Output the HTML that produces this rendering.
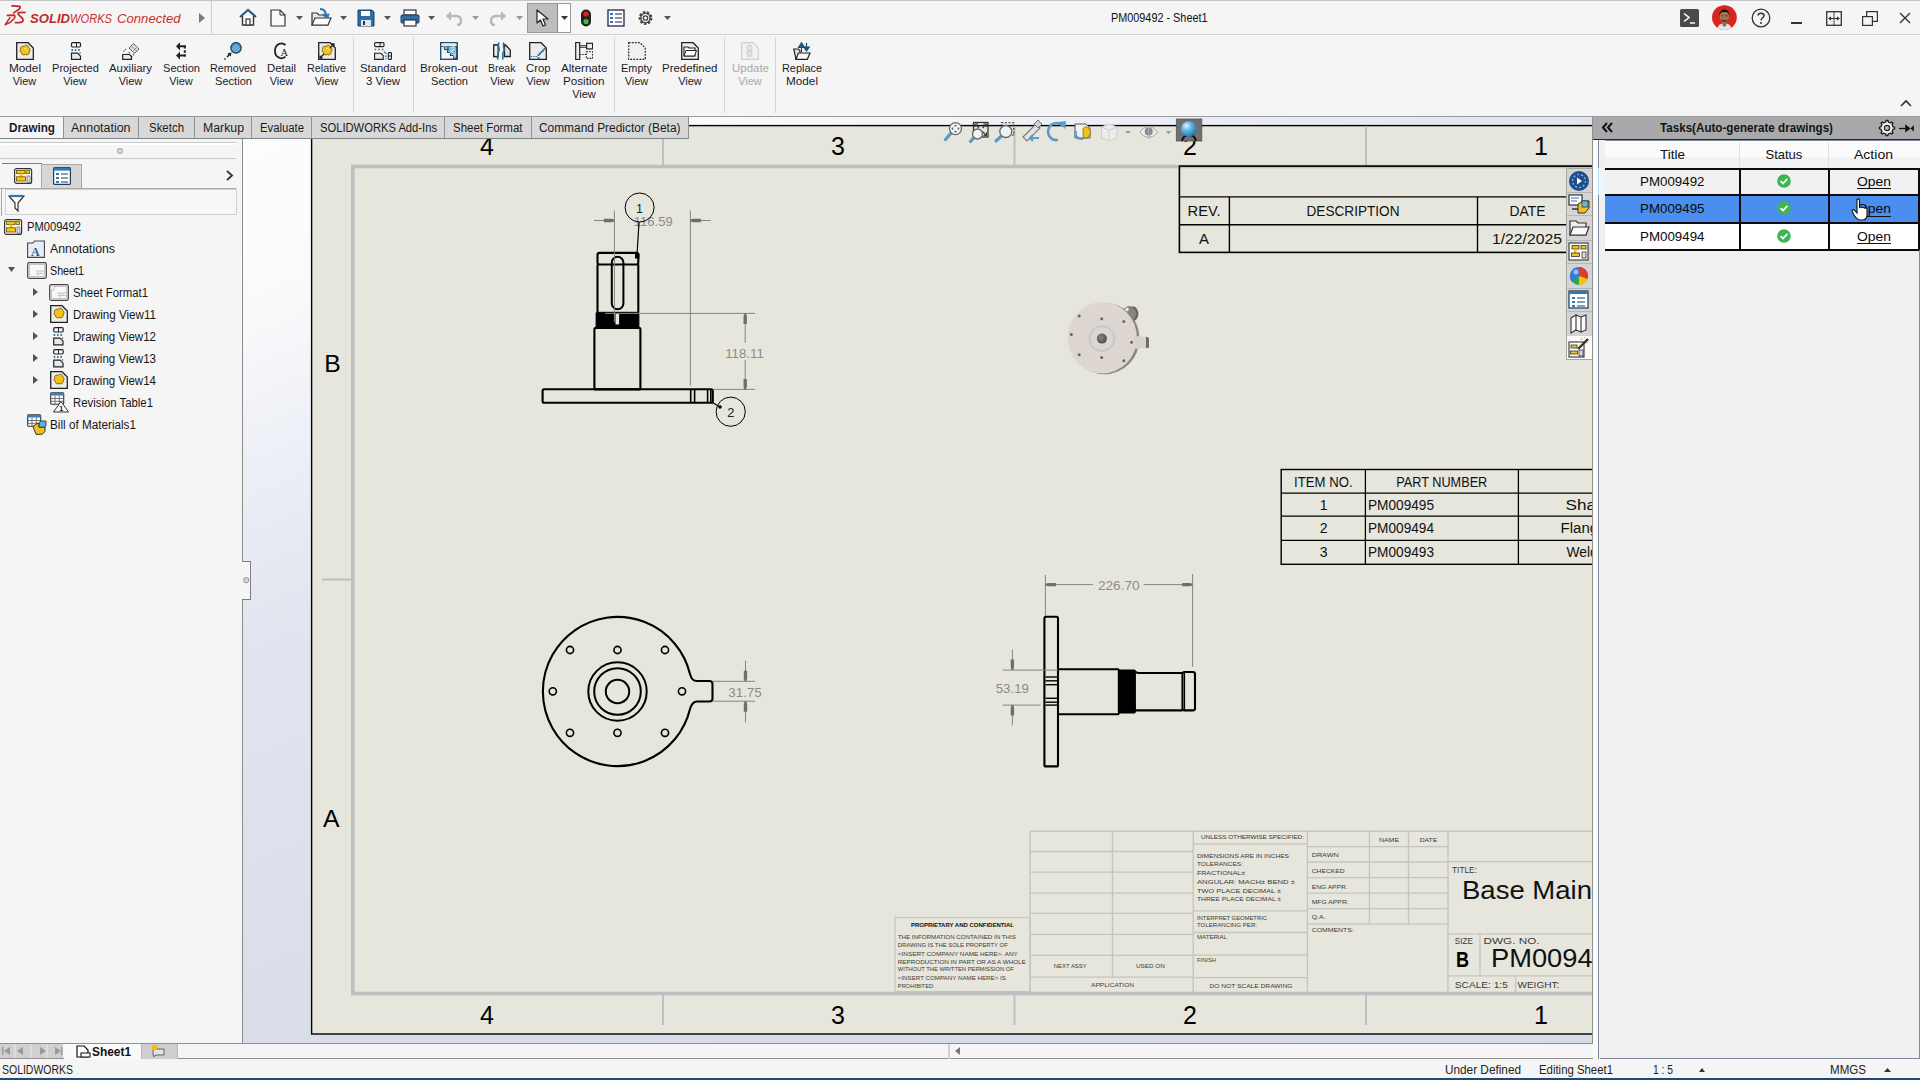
<!DOCTYPE html>
<html><head><meta charset="utf-8">
<style>
*{margin:0;padding:0;box-sizing:border-box}
html,body{width:1920px;height:1080px;overflow:hidden;background:#f5f5f5;font-family:"Liberation Sans",sans-serif;color:#000;position:relative}
.a{position:absolute}
.t{position:absolute;white-space:nowrap}
svg{overflow:hidden}
</style></head><body>
<div class=a style="left:243px;top:117px;width:1349px;height:927px;background:linear-gradient(158deg,#fdfdfd 0%,#fafafb 13%,#eceff6 24%,#e0e5ef 36%,#d9dee9 60%,#d5dbe7 100%)"></div><div class=a style="left:1592px;top:117px;width:1px;height:927px;background:#8f8f8f;"></div><div class=a style="left:243px;top:1043px;width:1350px;height:1px;background:#8f8f8f;"></div><svg class=a style="left:243px;top:117px" width="1349" height="926" viewBox="243 117 1349 926"><rect x="311.6" y="125.6" width="1400" height="908.4" fill="#e6e6dc" stroke="#000" stroke-width="1.4"/><path d="M1700 166.5 H352.8 V993.5 H1700" fill="none" stroke="#c0bfc0" stroke-width="3.6"/><line x1="663" y1="126" x2="663" y2="165" stroke="#c0bfc0" stroke-width="2"/><line x1="663" y1="995" x2="663" y2="1025" stroke="#c0bfc0" stroke-width="2"/><line x1="1014.5" y1="126" x2="1014.5" y2="165" stroke="#c0bfc0" stroke-width="2"/><line x1="1014.5" y1="995" x2="1014.5" y2="1025" stroke="#c0bfc0" stroke-width="2"/><line x1="1366" y1="126" x2="1366" y2="165" stroke="#c0bfc0" stroke-width="2"/><line x1="1366" y1="995" x2="1366" y2="1025" stroke="#c0bfc0" stroke-width="2"/><line x1="322" y1="579.5" x2="351" y2="579.5" stroke="#c0bfc0" stroke-width="2"/><text x="487" y="155.42" font-size="25" fill="#000" text-anchor="middle" font-weight="400" font-family="Liberation Sans">4</text><text x="487" y="1024.22" font-size="25" fill="#000" text-anchor="middle" font-weight="400" font-family="Liberation Sans">4</text><text x="838" y="155.42" font-size="25" fill="#000" text-anchor="middle" font-weight="400" font-family="Liberation Sans">3</text><text x="838" y="1024.22" font-size="25" fill="#000" text-anchor="middle" font-weight="400" font-family="Liberation Sans">3</text><text x="1190" y="155.42" font-size="25" fill="#000" text-anchor="middle" font-weight="400" font-family="Liberation Sans">2</text><text x="1190" y="1024.22" font-size="25" fill="#000" text-anchor="middle" font-weight="400" font-family="Liberation Sans">2</text><text x="1541" y="155.42" font-size="25" fill="#000" text-anchor="middle" font-weight="400" font-family="Liberation Sans">1</text><text x="1541" y="1024.22" font-size="25" fill="#000" text-anchor="middle" font-weight="400" font-family="Liberation Sans">1</text><text x="332.5" y="372.11" font-size="24.7" fill="#000" text-anchor="middle" font-weight="400" font-family="Liberation Sans">B</text><text x="331.3" y="826.81" font-size="24.7" fill="#000" text-anchor="middle" font-weight="400" font-family="Liberation Sans">A</text><rect x="597.5" y="252.9" width="40.8" height="11.6" stroke="#000" stroke-width="2.1" fill="none" rx="2"/><line x1="597.5" y1="264.5" x2="597.5" y2="312.5" stroke="#000" stroke-width="2.1"/><line x1="638.3" y1="264.5" x2="638.3" y2="312.5" stroke="#000" stroke-width="2.1"/><rect x="611.8" y="256.8" width="11.6" height="52.5" stroke="#000" stroke-width="2" fill="none" rx="5.8"/><rect x="596.1" y="312.3" width="42.8" height="15.6" stroke="#000" stroke-width="1" fill="#000" rx="1"/><rect x="594.4" y="327.9" width="46" height="61.5" stroke="#000" stroke-width="2.1" fill="none" rx="1.5"/><rect x="542.6" y="389.2" width="170.2" height="13.6" stroke="#000" stroke-width="2.1" fill="none" rx="1.5"/><line x1="690.7" y1="390" x2="690.7" y2="402" stroke="#000" stroke-width="1.6"/><line x1="694.6" y1="390" x2="694.6" y2="402" stroke="#000" stroke-width="1.6"/><line x1="707.6" y1="390" x2="707.6" y2="402" stroke="#000" stroke-width="1.6"/><line x1="710.8" y1="390" x2="710.8" y2="402" stroke="#000" stroke-width="1.6"/><rect x="615.5" y="314" width="3.6" height="10.5" stroke="none" stroke-width="0" fill="#e6e6dc" rx="0"/><line x1="614.4" y1="210.7" x2="614.4" y2="322" stroke="#85857f" stroke-width="1"/><line x1="690.4" y1="210.7" x2="690.4" y2="385.6" stroke="#85857f" stroke-width="1"/><line x1="594" y1="220.5" x2="614.4" y2="220.5" stroke="#85857f" stroke-width="1"/><line x1="690.4" y1="220.5" x2="711" y2="220.5" stroke="#85857f" stroke-width="1"/><path d="M614.4 219.6 L611.4 218.8 H603.9 V222.2 H611.4 L614.4 221.4Z" fill="#6f6f6a"/><path d="M690.4 219.6 L693.4 218.8 H700.9 V222.2 H693.4 L690.4 221.4Z" fill="#6f6f6a"/><text x="653.2" y="226.30" font-size="13.3" fill="#8c8c87" text-anchor="middle" font-weight="400" font-family="Liberation Sans" textLength="38.9" lengthAdjust="spacingAndGlyphs">116.59</text><line x1="605" y1="313.4" x2="755" y2="313.4" stroke="#85857f" stroke-width="1"/><line x1="712.8" y1="389.4" x2="755" y2="389.4" stroke="#85857f" stroke-width="1"/><line x1="745.2" y1="313.4" x2="745.2" y2="342.8" stroke="#85857f" stroke-width="1"/><line x1="745.2" y1="360.3" x2="745.2" y2="389.4" stroke="#85857f" stroke-width="1"/><path d="M744.3000000000001 313.4 L743.5 316.4 V323.9 H746.9000000000001 V316.4 L746.1 313.4Z" fill="#6f6f6a"/><path d="M744.3000000000001 389.4 L743.5 386.4 V378.9 H746.9000000000001 V386.4 L746.1 389.4Z" fill="#6f6f6a"/><text x="744.5" y="357.60" font-size="13.3" fill="#8c8c87" text-anchor="middle" font-weight="400" font-family="Liberation Sans" textLength="38.5" lengthAdjust="spacingAndGlyphs">118.11</text><circle cx="639.6" cy="207.5" r="14.5" fill="none" stroke="#000" stroke-width="1"/><text x="639.6" y="213.41" font-size="12.5" fill="#222" text-anchor="middle" font-weight="400" font-family="Liberation Sans">1</text><line x1="639" y1="222" x2="637" y2="255" stroke="#000" stroke-width="1.2"/><rect x="635" y="253.5" width="4.5" height="5" fill="#000"/><circle cx="730.7" cy="411.7" r="14.6" fill="none" stroke="#000" stroke-width="1"/><text x="730.9" y="417.33" font-size="12.8" fill="#222" text-anchor="middle" font-weight="400" font-family="Liberation Sans">2</text><line x1="712.8" y1="402.8" x2="720" y2="407" stroke="#000" stroke-width="1.2"/><circle cx="720" cy="407" r="1.8" fill="#000"/><defs><radialGradient id="hole" cx="0.4" cy="0.4" r="0.7"><stop offset="0" stop-color="#8a8482"/><stop offset="1" stop-color="#4a4644"/></radialGradient></defs><ellipse cx="1104.5" cy="338.5" rx="35" ry="35.8" fill="#8c8580"/><circle cx="1130" cy="313.5" r="7.6" fill="#8a847f"/><path d="M1133 307 A7.6 7.6 0 0 1 1134 320" stroke="#6a6560" stroke-width="2.4" fill="none"/><circle cx="1127" cy="309.5" r="1.7" fill="#f2f2f2"/><ellipse cx="1102.3" cy="337.7" rx="34.6" ry="35.8" fill="#ddd6d1"/><path d="M1134 336 L1146.5 337 L1146.5 348 L1134 349 Z" fill="#d9d2cd"/><path d="M1146 336.6 L1149 338 L1149 347.5 L1146 348.2 Z" fill="#6f6a66"/><circle cx="1101.9" cy="338.6" r="12.3" fill="none" stroke="#c3c9cd" stroke-width="2"/><circle cx="1101.9" cy="338.6" r="5" fill="url(#hole)"/><circle cx="1079.2" cy="315.9" r="1.5" fill="#6a6562"/><circle cx="1101.7" cy="318.7" r="1.5" fill="#6a6562"/><circle cx="1123.8" cy="321.5" r="1.5" fill="#6a6562"/><circle cx="1071.3" cy="334.4" r="1.5" fill="#6a6562"/><circle cx="1131.5" cy="342.3" r="1.5" fill="#6a6562"/><circle cx="1079.2" cy="354.8" r="1.5" fill="#6a6562"/><circle cx="1101.7" cy="357.6" r="1.5" fill="#6a6562"/><circle cx="1123.8" cy="360.8" r="1.5" fill="#6a6562"/><path d="M690 674 C691.5 679 693 681 697 681 H709.5 Q712.5 681 712.5 684 V698.5 Q712.5 701.5 709.5 701.5 H697 C693 701.5 691.5 704 690 709 A74.6 74.6 0 1 1 690 674 Z" fill="none" stroke="#000" stroke-width="2.1"/><circle cx="617.5" cy="691.5" r="29.2" fill="none" stroke="#000" stroke-width="2"/><circle cx="617.5" cy="691.5" r="23.3" fill="none" stroke="#000" stroke-width="2"/><circle cx="617.5" cy="691.5" r="11.7" fill="none" stroke="#000" stroke-width="2"/><circle cx="570" cy="650" r="3.6" fill="none" stroke="#000" stroke-width="1.6"/><circle cx="617.5" cy="650" r="3.6" fill="none" stroke="#000" stroke-width="1.6"/><circle cx="665" cy="650" r="3.6" fill="none" stroke="#000" stroke-width="1.6"/><circle cx="552.8" cy="691.3" r="3.6" fill="none" stroke="#000" stroke-width="1.6"/><circle cx="682" cy="691.3" r="3.6" fill="none" stroke="#000" stroke-width="1.6"/><circle cx="570" cy="732.8" r="3.6" fill="none" stroke="#000" stroke-width="1.6"/><circle cx="617.5" cy="732.8" r="3.6" fill="none" stroke="#000" stroke-width="1.6"/><circle cx="665" cy="732.8" r="3.6" fill="none" stroke="#000" stroke-width="1.6"/><line x1="712.5" y1="681.3" x2="755" y2="681.3" stroke="#85857f" stroke-width="1"/><line x1="712.5" y1="701.2" x2="755" y2="701.2" stroke="#85857f" stroke-width="1"/><line x1="745.5" y1="660.8" x2="745.5" y2="681.3" stroke="#85857f" stroke-width="1"/><line x1="745.5" y1="701.2" x2="745.5" y2="722.5" stroke="#85857f" stroke-width="1"/><path d="M744.6 681.3 L743.8 678.3 V670.8 H747.2 V678.3 L746.4 681.3Z" fill="#6f6f6a"/><path d="M744.6 701.2 L743.8 704.2 V711.7 H747.2 V704.2 L746.4 701.2Z" fill="#6f6f6a"/><text x="745" y="697.20" font-size="13.3" fill="#8c8c87" text-anchor="middle" font-weight="400" font-family="Liberation Sans" textLength="33.4" lengthAdjust="spacingAndGlyphs">31.75</text><rect x="1044.4" y="616.7" width="13.6" height="149.7" stroke="#000" stroke-width="2.1" fill="none" rx="1.5"/><path d="M1058 669.2 H1118 L1119.5 671 V712.5 L1118 714.3 H1058" fill="none" stroke="#000" stroke-width="2.1"/><rect x="1118.3" y="670" width="17.1" height="43" stroke="#000" stroke-width="1" fill="#000" rx="1"/><path d="M1135.4 672 L1138 673 H1182.5 M1135.4 710.4 H1182.5" fill="none" stroke="#000" stroke-width="2.2"/><rect x="1182.5" y="672" width="12.5" height="38.4" stroke="#000" stroke-width="2.1" fill="none" rx="2"/><line x1="1184.5" y1="673" x2="1184.5" y2="710" stroke="#000" stroke-width="1.2"/><line x1="1045.5" y1="677" x2="1057" y2="677" stroke="#000" stroke-width="1.4"/><line x1="1045.5" y1="680.8" x2="1057" y2="680.8" stroke="#000" stroke-width="1.4"/><line x1="1045.5" y1="684.7" x2="1057" y2="684.7" stroke="#000" stroke-width="1.4"/><line x1="1045.5" y1="698.3" x2="1057" y2="698.3" stroke="#000" stroke-width="1.4"/><line x1="1045.5" y1="702.2" x2="1057" y2="702.2" stroke="#000" stroke-width="1.4"/><line x1="1045.5" y1="705.1" x2="1057" y2="705.1" stroke="#000" stroke-width="1.4"/><line x1="1045.4" y1="574.9" x2="1045.4" y2="616" stroke="#85857f" stroke-width="1"/><line x1="1192.6" y1="574" x2="1192.6" y2="667" stroke="#85857f" stroke-width="1"/><line x1="1045.4" y1="584.6" x2="1093" y2="584.6" stroke="#85857f" stroke-width="1"/><line x1="1143.6" y1="584.6" x2="1192.6" y2="584.6" stroke="#85857f" stroke-width="1"/><path d="M1045.4 583.7 L1048.4 582.9 H1055.9 V586.3000000000001 H1048.4 L1045.4 585.5Z" fill="#6f6f6a"/><path d="M1192.6 583.7 L1189.6 582.9 H1182.1 V586.3000000000001 H1189.6 L1192.6 585.5Z" fill="#6f6f6a"/><text x="1118.8" y="590.40" font-size="13.3" fill="#8c8c87" text-anchor="middle" font-weight="400" font-family="Liberation Sans" textLength="41.7" lengthAdjust="spacingAndGlyphs">226.70</text><line x1="1002.6" y1="670.1" x2="1058" y2="670.1" stroke="#85857f" stroke-width="1"/><line x1="1002.6" y1="705.1" x2="1040.5" y2="705.1" stroke="#85857f" stroke-width="1"/><line x1="1012.4" y1="649.7" x2="1012.4" y2="670.1" stroke="#85857f" stroke-width="1"/><line x1="1012.4" y1="705.1" x2="1012.4" y2="725.5" stroke="#85857f" stroke-width="1"/><path d="M1011.5 670.1 L1010.6999999999999 667.1 V659.6 H1014.1 V667.1 L1013.3 670.1Z" fill="#6f6f6a"/><path d="M1011.5 705.1 L1010.6999999999999 708.1 V715.6 H1014.1 V708.1 L1013.3 705.1Z" fill="#6f6f6a"/><text x="1012.3" y="693.40" font-size="13.3" fill="#8c8c87" text-anchor="middle" font-weight="400" font-family="Liberation Sans" textLength="33.1" lengthAdjust="spacingAndGlyphs">53.19</text><rect x="1179.4" y="166.1" width="600" height="86.3" stroke="#000" stroke-width="1.6" fill="none" rx="0"/><line x1="1179.4" y1="196.9" x2="1600" y2="196.9" stroke="#000" stroke-width="1.4"/><line x1="1179.4" y1="224.7" x2="1600" y2="224.7" stroke="#000" stroke-width="1.4"/><line x1="1229.4" y1="196.9" x2="1229.4" y2="252.4" stroke="#000" stroke-width="1.4"/><line x1="1477.5" y1="196.9" x2="1477.5" y2="252.4" stroke="#000" stroke-width="1.4"/><text x="1204" y="216.44" font-size="15" fill="#111" text-anchor="middle" font-weight="400" font-family="Liberation Sans" textLength="33" lengthAdjust="spacingAndGlyphs">REV.</text><text x="1353" y="216.44" font-size="15" fill="#111" text-anchor="middle" font-weight="400" font-family="Liberation Sans" textLength="93" lengthAdjust="spacingAndGlyphs">DESCRIPTION</text><text x="1527.5" y="216.44" font-size="15" fill="#111" text-anchor="middle" font-weight="400" font-family="Liberation Sans" textLength="36" lengthAdjust="spacingAndGlyphs">DATE</text><text x="1204" y="244.44" font-size="15" fill="#111" text-anchor="middle" font-weight="400" font-family="Liberation Sans">A</text><text x="1527" y="244.44" font-size="15" fill="#111" text-anchor="middle" font-weight="400" font-family="Liberation Sans" textLength="70" lengthAdjust="spacingAndGlyphs">1/22/2025</text><rect x="1281.2" y="469.5" width="600" height="94.8" stroke="#000" stroke-width="1.4" fill="none" rx="0"/><line x1="1281.2" y1="493.2" x2="1600" y2="493.2" stroke="#000" stroke-width="1.3"/><line x1="1281.2" y1="516.2" x2="1600" y2="516.2" stroke="#000" stroke-width="1.3"/><line x1="1281.2" y1="540.3" x2="1600" y2="540.3" stroke="#000" stroke-width="1.3"/><line x1="1365.4" y1="469.5" x2="1365.4" y2="564.3" stroke="#000" stroke-width="1.3"/><line x1="1518.4" y1="469.5" x2="1518.4" y2="564.3" stroke="#000" stroke-width="1.3"/><text x="1323.3" y="486.51" font-size="14" fill="#111" text-anchor="middle" font-weight="400" font-family="Liberation Sans" textLength="58.5" lengthAdjust="spacingAndGlyphs">ITEM NO.</text><text x="1441.8" y="486.51" font-size="14" fill="#111" text-anchor="middle" font-weight="400" font-family="Liberation Sans" textLength="91" lengthAdjust="spacingAndGlyphs">PART NUMBER</text><text x="1323.6" y="510.21" font-size="14" fill="#111" text-anchor="middle" font-weight="400" font-family="Liberation Sans">1</text><text x="1368" y="510.21" font-size="14" fill="#111" text-anchor="start" font-weight="400" font-family="Liberation Sans" textLength="66" lengthAdjust="spacingAndGlyphs">PM009495</text><text x="1565.6" y="510.21" font-size="14" fill="#111" text-anchor="start" font-weight="400" font-family="Liberation Sans" textLength="40" lengthAdjust="spacingAndGlyphs">Shaft</text><text x="1323.6" y="532.71" font-size="14" fill="#111" text-anchor="middle" font-weight="400" font-family="Liberation Sans">2</text><text x="1368" y="532.71" font-size="14" fill="#111" text-anchor="start" font-weight="400" font-family="Liberation Sans" textLength="66" lengthAdjust="spacingAndGlyphs">PM009494</text><text x="1560.5" y="532.71" font-size="14" fill="#111" text-anchor="start" font-weight="400" font-family="Liberation Sans" textLength="46" lengthAdjust="spacingAndGlyphs">Flange</text><text x="1323.6" y="556.71" font-size="14" fill="#111" text-anchor="middle" font-weight="400" font-family="Liberation Sans">3</text><text x="1368" y="556.71" font-size="14" fill="#111" text-anchor="start" font-weight="400" font-family="Liberation Sans" textLength="66" lengthAdjust="spacingAndGlyphs">PM009493</text><text x="1566.5" y="556.71" font-size="14" fill="#111" text-anchor="start" font-weight="400" font-family="Liberation Sans" textLength="62" lengthAdjust="spacingAndGlyphs">Weldment</text><rect x="895" y="917.5" width="135" height="74" stroke="#c4c4c0" stroke-width="1.2" fill="none" rx="0"/><line x1="1030" y1="831.3" x2="1600" y2="831.3" stroke="#c4c4c0" stroke-width="1.5"/><line x1="1030" y1="851.5" x2="1193" y2="851.5" stroke="#c4c4c0" stroke-width="1.3"/><line x1="1030" y1="872.1" x2="1193" y2="872.1" stroke="#c4c4c0" stroke-width="1.3"/><line x1="1030" y1="893.1" x2="1193" y2="893.1" stroke="#c4c4c0" stroke-width="1.3"/><line x1="1030" y1="913.4" x2="1193" y2="913.4" stroke="#c4c4c0" stroke-width="1.3"/><line x1="1030" y1="934.4" x2="1193" y2="934.4" stroke="#c4c4c0" stroke-width="1.3"/><line x1="1030" y1="955.4" x2="1193" y2="955.4" stroke="#c4c4c0" stroke-width="1.3"/><line x1="1030" y1="977.1" x2="1193" y2="977.1" stroke="#c4c4c0" stroke-width="1.3"/><line x1="1030" y1="831.3" x2="1030" y2="992" stroke="#c4c4c0" stroke-width="1.3"/><line x1="1193.2" y1="831.3" x2="1193.2" y2="992" stroke="#c4c4c0" stroke-width="1.3"/><line x1="1307.4" y1="831.3" x2="1307.4" y2="992" stroke="#c4c4c0" stroke-width="1.3"/><line x1="1448" y1="831.3" x2="1448" y2="992" stroke="#c4c4c0" stroke-width="1.3"/><line x1="1112.5" y1="831.3" x2="1112.5" y2="977.1" stroke="#c4c4c0" stroke-width="1.3"/><line x1="1193.2" y1="843.9" x2="1307.4" y2="843.9" stroke="#c4c4c0" stroke-width="1.3"/><line x1="1193.2" y1="910.8" x2="1307.4" y2="910.8" stroke="#c4c4c0" stroke-width="1.3"/><line x1="1193.2" y1="932.5" x2="1307.4" y2="932.5" stroke="#c4c4c0" stroke-width="1.3"/><line x1="1193.2" y1="955.2" x2="1307.4" y2="955.2" stroke="#c4c4c0" stroke-width="1.3"/><line x1="1193.2" y1="977.6" x2="1307.4" y2="977.6" stroke="#c4c4c0" stroke-width="1.3"/><line x1="1307.4" y1="846.7" x2="1448" y2="846.7" stroke="#c4c4c0" stroke-width="1.3"/><line x1="1307.4" y1="862" x2="1448" y2="862" stroke="#c4c4c0" stroke-width="1.3"/><line x1="1307.4" y1="877.7" x2="1448" y2="877.7" stroke="#c4c4c0" stroke-width="1.3"/><line x1="1307.4" y1="893.2" x2="1448" y2="893.2" stroke="#c4c4c0" stroke-width="1.3"/><line x1="1307.4" y1="908.6" x2="1448" y2="908.6" stroke="#c4c4c0" stroke-width="1.3"/><line x1="1307.4" y1="924.2" x2="1448" y2="924.2" stroke="#c4c4c0" stroke-width="1.3"/><line x1="1369.4" y1="831.3" x2="1369.4" y2="924.2" stroke="#c4c4c0" stroke-width="1.3"/><line x1="1408.5" y1="831.3" x2="1408.5" y2="924.2" stroke="#c4c4c0" stroke-width="1.3"/><line x1="1448" y1="861.6" x2="1600" y2="861.6" stroke="#c4c4c0" stroke-width="1.3"/><line x1="1448" y1="933.8" x2="1600" y2="933.8" stroke="#c4c4c0" stroke-width="1.3"/><line x1="1448" y1="975.9" x2="1600" y2="975.9" stroke="#c4c4c0" stroke-width="1.3"/><line x1="1480" y1="933.8" x2="1480" y2="975.9" stroke="#c4c4c0" stroke-width="1.3"/><line x1="1515.6" y1="975.9" x2="1515.6" y2="992" stroke="#c4c4c0" stroke-width="1.3"/><text x="962.5" y="927.02" font-size="6.2" fill="#111" text-anchor="middle" font-weight="700" font-family="Liberation Sans" textLength="103" lengthAdjust="spacingAndGlyphs">PROPRIETARY AND CONFIDENTIAL</text><text x="897.8" y="938.67" font-size="6" fill="#3a3a3a" text-anchor="start" font-weight="400" font-family="Liberation Sans" textLength="118" lengthAdjust="spacingAndGlyphs">THE INFORMATION CONTAINED IN THIS</text><text x="897.8" y="946.77" font-size="6" fill="#3a3a3a" text-anchor="start" font-weight="400" font-family="Liberation Sans" textLength="110" lengthAdjust="spacingAndGlyphs">DRAWING IS THE SOLE PROPERTY OF</text><text x="897.8" y="955.57" font-size="6" fill="#3a3a3a" text-anchor="start" font-weight="400" font-family="Liberation Sans" textLength="120" lengthAdjust="spacingAndGlyphs">&lt;INSERT COMPANY NAME HERE&gt;.  ANY</text><text x="897.8" y="963.67" font-size="6" fill="#3a3a3a" text-anchor="start" font-weight="400" font-family="Liberation Sans" textLength="128" lengthAdjust="spacingAndGlyphs">REPRODUCTION IN PART OR AS A WHOLE</text><text x="897.8" y="971.47" font-size="6" fill="#3a3a3a" text-anchor="start" font-weight="400" font-family="Liberation Sans" textLength="116" lengthAdjust="spacingAndGlyphs">WITHOUT THE WRITTEN PERMISSION OF</text><text x="897.8" y="979.57" font-size="6" fill="#3a3a3a" text-anchor="start" font-weight="400" font-family="Liberation Sans" textLength="108" lengthAdjust="spacingAndGlyphs">&lt;INSERT COMPANY NAME HERE&gt; IS</text><text x="897.8" y="988.37" font-size="6" fill="#3a3a3a" text-anchor="start" font-weight="400" font-family="Liberation Sans" textLength="37" lengthAdjust="spacingAndGlyphs">PROHIBITED.</text><text x="1070.3" y="968.37" font-size="6" fill="#3a3a3a" text-anchor="middle" font-weight="400" font-family="Liberation Sans" textLength="33" lengthAdjust="spacingAndGlyphs">NEXT ASSY</text><text x="1150.4" y="968.37" font-size="6" fill="#3a3a3a" text-anchor="middle" font-weight="400" font-family="Liberation Sans" textLength="29" lengthAdjust="spacingAndGlyphs">USED ON</text><text x="1112.5" y="987.47" font-size="6" fill="#3a3a3a" text-anchor="middle" font-weight="400" font-family="Liberation Sans" textLength="43" lengthAdjust="spacingAndGlyphs">APPLICATION</text><text x="1201" y="839.22" font-size="6.2" fill="#3a3a3a" text-anchor="start" font-weight="400" font-family="Liberation Sans" textLength="103" lengthAdjust="spacingAndGlyphs">UNLESS OTHERWISE SPECIFIED:</text><text x="1197" y="858.37" font-size="6" fill="#3a3a3a" text-anchor="start" font-weight="400" font-family="Liberation Sans" textLength="92" lengthAdjust="spacingAndGlyphs">DIMENSIONS ARE IN INCHES</text><text x="1197" y="866.47" font-size="6" fill="#3a3a3a" text-anchor="start" font-weight="400" font-family="Liberation Sans" textLength="46" lengthAdjust="spacingAndGlyphs">TOLERANCES:</text><text x="1197" y="875.47" font-size="6" fill="#3a3a3a" text-anchor="start" font-weight="400" font-family="Liberation Sans" textLength="48" lengthAdjust="spacingAndGlyphs">FRACTIONAL±</text><text x="1197" y="883.57" font-size="6" fill="#3a3a3a" text-anchor="start" font-weight="400" font-family="Liberation Sans" textLength="98" lengthAdjust="spacingAndGlyphs">ANGULAR: MACH±    BEND ±</text><text x="1197" y="892.57" font-size="6" fill="#3a3a3a" text-anchor="start" font-weight="400" font-family="Liberation Sans" textLength="84" lengthAdjust="spacingAndGlyphs">TWO PLACE DECIMAL    ±</text><text x="1197" y="901.47" font-size="6" fill="#3a3a3a" text-anchor="start" font-weight="400" font-family="Liberation Sans" textLength="84" lengthAdjust="spacingAndGlyphs">THREE PLACE DECIMAL  ±</text><text x="1197" y="919.67" font-size="6" fill="#3a3a3a" text-anchor="start" font-weight="400" font-family="Liberation Sans" textLength="70" lengthAdjust="spacingAndGlyphs">INTERPRET GEOMETRIC</text><text x="1197" y="927.37" font-size="6" fill="#3a3a3a" text-anchor="start" font-weight="400" font-family="Liberation Sans" textLength="60" lengthAdjust="spacingAndGlyphs">TOLERANCING PER:</text><text x="1197" y="939.47" font-size="6" fill="#3a3a3a" text-anchor="start" font-weight="400" font-family="Liberation Sans" textLength="30" lengthAdjust="spacingAndGlyphs">MATERIAL</text><text x="1197" y="961.97" font-size="6" fill="#3a3a3a" text-anchor="start" font-weight="400" font-family="Liberation Sans" textLength="19" lengthAdjust="spacingAndGlyphs">FINISH</text><text x="1250.9" y="987.57" font-size="6" fill="#3a3a3a" text-anchor="middle" font-weight="400" font-family="Liberation Sans" textLength="83" lengthAdjust="spacingAndGlyphs">DO NOT SCALE DRAWING</text><text x="1389" y="841.67" font-size="6" fill="#3a3a3a" text-anchor="middle" font-weight="400" font-family="Liberation Sans" textLength="20" lengthAdjust="spacingAndGlyphs">NAME</text><text x="1428.5" y="841.67" font-size="6" fill="#3a3a3a" text-anchor="middle" font-weight="400" font-family="Liberation Sans" textLength="17.5" lengthAdjust="spacingAndGlyphs">DATE</text><text x="1311.7" y="857.27" font-size="6" fill="#3a3a3a" text-anchor="start" font-weight="400" font-family="Liberation Sans" textLength="27" lengthAdjust="spacingAndGlyphs">DRAWN</text><text x="1311.7" y="872.67" font-size="6" fill="#3a3a3a" text-anchor="start" font-weight="400" font-family="Liberation Sans" textLength="33" lengthAdjust="spacingAndGlyphs">CHECKED</text><text x="1311.7" y="888.67" font-size="6" fill="#3a3a3a" text-anchor="start" font-weight="400" font-family="Liberation Sans" textLength="36" lengthAdjust="spacingAndGlyphs">ENG APPR.</text><text x="1311.7" y="903.67" font-size="6" fill="#3a3a3a" text-anchor="start" font-weight="400" font-family="Liberation Sans" textLength="37" lengthAdjust="spacingAndGlyphs">MFG APPR.</text><text x="1311.7" y="918.57" font-size="6" fill="#3a3a3a" text-anchor="start" font-weight="400" font-family="Liberation Sans" textLength="14" lengthAdjust="spacingAndGlyphs">Q.A.</text><text x="1311.7" y="932.47" font-size="6" fill="#3a3a3a" text-anchor="start" font-weight="400" font-family="Liberation Sans" textLength="42" lengthAdjust="spacingAndGlyphs">COMMENTS:</text><text x="1452" y="872.57" font-size="8.6" fill="#3a3a3a" text-anchor="start" font-weight="400" font-family="Liberation Sans" textLength="25" lengthAdjust="spacingAndGlyphs">TITLE:</text><text x="1462" y="899.12" font-size="25" fill="#111" text-anchor="start" font-weight="400" font-family="Liberation Sans" textLength="130" lengthAdjust="spacingAndGlyphs">Base Main</text><text x="1454.8" y="943.57" font-size="8.6" fill="#3a3a3a" text-anchor="start" font-weight="400" font-family="Liberation Sans" textLength="18" lengthAdjust="spacingAndGlyphs">SIZE</text><text x="1456" y="967.34" font-size="22" fill="#000" text-anchor="start" font-weight="700" font-family="Liberation Sans" textLength="13" lengthAdjust="spacingAndGlyphs">B</text><text x="1483.6" y="943.57" font-size="8.6" fill="#3a3a3a" text-anchor="start" font-weight="400" font-family="Liberation Sans" textLength="56" lengthAdjust="spacingAndGlyphs">DWG.  NO.</text><text x="1491" y="967.43" font-size="25" fill="#111" text-anchor="start" font-weight="400" font-family="Liberation Sans" textLength="132" lengthAdjust="spacingAndGlyphs">PM009492</text><text x="1454.8" y="987.67" font-size="8.6" fill="#3a3a3a" text-anchor="start" font-weight="400" font-family="Liberation Sans" textLength="53" lengthAdjust="spacingAndGlyphs">SCALE: 1:5</text><text x="1517.4" y="987.67" font-size="8.6" fill="#3a3a3a" text-anchor="start" font-weight="400" font-family="Liberation Sans" textLength="42" lengthAdjust="spacingAndGlyphs">WEIGHT:</text></svg><svg class=a style="left:940px;top:117px" width="265" height="27" viewBox="940 117 265 27"><path d="M945.5 139.5 L951.2 132.9" stroke="#5b9bc9" stroke-width="3.2" stroke-linecap="round"/><circle cx="955.5" cy="128.6" r="6" fill="#f0f3f5" stroke="#666" stroke-width="1.3"/><path d="M955.5 124.5L953.8 126.3H957.2Z M955.5 132.7L953.8 130.9H957.2Z M951.4 128.6L953.2 126.9V130.3Z M959.6 128.6L957.8 126.9V130.3Z" fill="#555"/><rect x="973.5" y="122.5" width="14.5" height="14.5" fill="none" stroke="#333" stroke-width="1.3"/><path d="M975.5 124.5L979 128M986 124.5L982.5 128M986 135L982.5 131.5" stroke="#333" stroke-width="1.1"/><path d="M975 124H978M975 124V127M986.5 124H983.5M986.5 124V127M986.5 135.5H983.5M986.5 135.5V132.5" stroke="#333" stroke-width="1.1"/><path d="M970.5 141.5 L973.9 137.6" stroke="#5b9bc9" stroke-width="3.2" stroke-linecap="round"/><circle cx="977.5" cy="134" r="5" fill="#f0f3f5" stroke="#666" stroke-width="1.3"/><rect x="1001.5" y="122.7" width="12.3" height="12.3" fill="none" stroke="#333" stroke-width="1.1" stroke-dasharray="2 1.5"/><path d="M996 141 L1001.5 135.8" stroke="#5b9bc9" stroke-width="3.2" stroke-linecap="round"/><circle cx="1005.8" cy="131.5" r="6" fill="#f0f3f5" stroke="#666" stroke-width="1.3"/><path d="M1023 137 L1036 124 L1040 128 L1027 141 Z" fill="#e4e4e4" stroke="#777" stroke-width="1.1"/><path d="M1034 124 L1038 120 L1042 124 L1038 128Z" fill="#cfcfcf" stroke="#777" stroke-width="1"/><path d="M1030 138 H1039 M1033 135 L1030 138 L1033 141" stroke="#5b9bc9" stroke-width="2.2" fill="none"/><path d="M1063 126 A8.5 8.5 0 1 0 1058 140" stroke="#5b9bc9" stroke-width="2.6" fill="none"/><path d="M1058 122 L1066 121 L1065 129Z" fill="#5b9bc9"/><path d="M1075 124 H1086 L1090 128 V138 H1075 Z" fill="#f2f2f2" stroke="#555" stroke-width="1"/><path d="M1076 131 A5.5 5.5 0 0 0 1085 137" stroke="#5b9bc9" stroke-width="2.4" fill="none"/><path d="M1083 129 C1084 126 1088 126 1089 129 C1091 130 1091 135 1088 137 C1086 139 1083 138 1083 135Z" fill="#f2c21a" stroke="#8a6a00" stroke-width="0.8"/><path d="M1101.5 127 L1109 124 L1117 127 V138 L1109 141 L1101.5 138Z" fill="#ececec" stroke="#cdcdcd"/><path d="M1101.5 127 L1109 130 L1117 127 M1109 130 V141" stroke="#cdcdcd" fill="none"/><path d="M1125 131 H1131 L1128 134Z" fill="#9a9a9a"/><path d="M1140 132 C1144 125 1153 125 1157.5 132 C1153 139 1144 139 1140 132Z" fill="#ececec" stroke="#a8a8a8"/><circle cx="1148.7" cy="131.5" r="4" fill="#8a8a8a"/><path d="M1148.7 126 V139" stroke="#b0b0b0"/><path d="M1165.5 131 H1171.5 L1168.5 134Z" fill="#9a9a9a"/><rect x="1176.3" y="119" width="25.5" height="22" fill="#6f6f6f" stroke="#555" stroke-width="0.8"/><defs><radialGradient id="sph" cx="0.35" cy="0.3" r="0.75"><stop offset="0" stop-color="#e6f6ff"/><stop offset="0.35" stop-color="#6cc0ee"/><stop offset="1" stop-color="#1f6fa8"/></radialGradient></defs><path d="M1182 141 C1183 136 1186 135 1189 135 C1192 135 1195 136 1196 141" stroke="#111" stroke-width="1.8" fill="none"/><circle cx="1188.8" cy="129" r="7.8" fill="url(#sph)"/></svg><div class=a style="left:1566px;top:168px;width:26px;height:192px;background:#d4d4d4;border:1px solid #a8a8a8;border-right:none"></div><div class=a style="left:1567px;top:191.6px;width:25px;height:1px;background:#b5b5b5;"></div><div class=a style="left:1567px;top:215px;width:25px;height:1px;background:#b5b5b5;"></div><div class=a style="left:1567px;top:239.6px;width:25px;height:1px;background:#b5b5b5;"></div><div class=a style="left:1567px;top:263px;width:25px;height:1px;background:#b5b5b5;"></div><div class=a style="left:1567px;top:287.5px;width:25px;height:1px;background:#b5b5b5;"></div><div class=a style="left:1567px;top:311px;width:25px;height:1px;background:#b5b5b5;"></div><div class=a style="left:1567px;top:335.5px;width:25px;height:1px;background:#b5b5b5;"></div><div class=a style="left:1567px;top:336px;width:25px;height:24px;background:#fafafa;border-bottom:1px solid #a8a8a8"></div><svg class=a style="left:1568px;top:169.5px;" width="22" height="21" viewBox="0 0 22 21"><circle cx="11" cy="11" r="10" fill="#1d4f8c"/><circle cx="11" cy="11" r="6.5" fill="none" stroke="#8fc3ee" stroke-width="1.2" stroke-dasharray="2 2"/><path d="M9 7.5L14 11L9 14.5Z" fill="#fff"/></svg><svg class=a style="left:1568px;top:193.1px;" width="22" height="21" viewBox="0 0 22 21"><rect x="1" y="2" width="13" height="10" fill="#fff" stroke="#333" stroke-width="1.2"/><path d="M3 5H11M3 8H9" stroke="#2f77b5" stroke-width="1.2"/><path d="M4 16H10" stroke="#333" stroke-width="1.5"/><path d="M10 11L15 8H21V15L17 20H10Z" fill="#f2c21a" stroke="#333" stroke-width="1"/><rect x="14" y="8" width="6" height="6" fill="#6fb7e0" stroke="#333" stroke-width="0.8"/></svg><svg class=a style="left:1568px;top:216.5px;" width="22" height="21" viewBox="0 0 22 21"><path d="M2 4H8L10 6H18V18H2Z" fill="#eee" stroke="#333" stroke-width="1.2"/><path d="M2 18L5 10H21L18 18Z" fill="#fafafa" stroke="#333" stroke-width="1.2"/></svg><svg class=a style="left:1568px;top:241.1px;" width="22" height="21" viewBox="0 0 22 21"><rect x="1" y="2" width="19" height="17" fill="#fff" stroke="#333" stroke-width="1.1"/><rect x="4" y="4.5" width="7" height="3.5" fill="#f2c21a" stroke="#333" stroke-width="0.8"/><rect x="6" y="8" width="2.5" height="4" fill="#f2c21a"/><rect x="3.5" y="12" width="8" height="3.5" fill="#f2c21a" stroke="#333" stroke-width="0.8"/><rect x="13" y="4.5" width="5" height="3.5" fill="#f2c21a" stroke="#333" stroke-width="0.8"/><rect x="14" y="11" width="4" height="6" fill="#ddd" stroke="#333" stroke-width="0.8"/></svg><svg class=a style="left:1568px;top:264.5px;" width="22" height="21" viewBox="0 0 22 21"><circle cx="11" cy="11" r="9" fill="#2da84a"/><path d="M11 11L11 2A9 9 0 0 0 2.5 8Z" fill="#3a78d8"/><path d="M11 11L2.5 8A9 9 0 0 0 4 17Z" fill="#3a78d8"/><path d="M11 11L11 2A9 9 0 0 1 19.5 14Z" fill="#e03a2a"/><path d="M11 11L19.5 14A9 9 0 0 1 11 20Z" fill="#f2c21a"/><circle cx="8" cy="7" r="2.5" fill="#fff" opacity="0.5"/></svg><svg class=a style="left:1568px;top:289.0px;" width="22" height="21" viewBox="0 0 22 21"><rect x="1" y="2" width="19" height="17" fill="#fff" stroke="#1c3c5c" stroke-width="1.2"/><rect x="1" y="2" width="19" height="3" fill="#2f77b5"/><rect x="4" y="8" width="3" height="2" fill="#2f77b5"/><rect x="4" y="12" width="3" height="2" fill="#2f77b5"/><rect x="4" y="16" width="3" height="2" fill="#2f77b5"/><path d="M9 9H17M9 13H17M9 17H17" stroke="#1c3c5c" stroke-width="1.1"/></svg><svg class=a style="left:1568px;top:312.5px;" width="22" height="21" viewBox="0 0 22 21"><path d="M3 5L8 2V17L3 20Z M8 2L13 4V19L8 17Z M13 4L18 2V17L13 19Z" fill="#fafafa" stroke="#333" stroke-width="1.1"/></svg><svg class=a style="left:1568px;top:337.0px;" width="22" height="21" viewBox="0 0 22 21"><rect x="1" y="5" width="15" height="15" fill="#fff" stroke="#333" stroke-width="1.1"/><rect x="3" y="8" width="6" height="3" fill="#f2c21a" stroke="#333" stroke-width="0.8"/><rect x="2.5" y="14" width="7" height="3" fill="#f2c21a" stroke="#333" stroke-width="0.8"/><rect x="11" y="13" width="4" height="6" fill="#ddd" stroke="#333" stroke-width="0.8"/><path d="M10 12L20 2" stroke="#333" stroke-width="2.4"/><path d="M13 3L14 1M18 6L20 5M16 1L17 0" stroke="#f2a020" stroke-width="1"/></svg><div class=a style="left:0px;top:139px;width:242px;height:905px;background:#f5f5f5;"></div><div class=a style="left:242px;top:117px;width:1px;height:927px;background:#8c8c8c;"></div><div class=a style="left:242px;top:561px;width:9px;height:39px;background:#f5f5f5;border:1px solid #7e7e7e;border-left:none"></div><svg class=a style="left:243px;top:577px;" width="7" height="7" viewBox="0 0 7 7"><circle cx="3.2" cy="3.2" r="2.6" fill="#d8d8d8" stroke="#8a8a8a" stroke-width="0.9"/></svg><div class=a style="left:0px;top:142px;width:236px;height:1px;background:#c8c8c8;"></div><div class=a style="left:1px;top:143px;width:235px;height:2px;background:#fff;"></div><svg class=a style="left:116px;top:147px;" width="8" height="8" viewBox="0 0 8 8"><circle cx="4" cy="4" r="2.6" fill="#ddd" stroke="#999" stroke-width="0.9"/></svg><div class=a style="left:0px;top:158px;width:236px;height:1px;background:#c8c8c8;"></div><div class=a style="left:2px;top:163px;width:40px;height:1px;background:#7e7e7e;"></div><div class=a style="left:1px;top:189px;width:1px;height:27px;background:#a8a8a8;"></div><div class=a style="left:41px;top:164px;width:41px;height:24px;background:#d6d6d6;border:1px solid #a8a8a8;border-bottom:none"></div><div class=a style="left:0px;top:188px;width:236px;height:1px;background:#a8a8a8;"></div><svg class=a style="left:14px;top:168px;" width="19" height="16" viewBox="0 0 19 16"><rect x="0.6" y="0.6" width="17" height="14.8" rx="2" fill="#fafafa" stroke="#333" stroke-width="1.2"/><rect x="2.5" y="2.5" width="8.5" height="3" fill="#f5c816" stroke="#6a5200" stroke-width="0.8"/><rect x="12" y="2.2" width="3.6" height="3.2" fill="#f5c816" stroke="#6a5200" stroke-width="0.8"/><rect x="5.5" y="5.5" width="3" height="3.5" fill="#f5c816"/><rect x="2.5" y="8.8" width="9" height="4.2" fill="#f5c816" stroke="#6a5200" stroke-width="0.8"/><rect x="13" y="8" width="3" height="6.2" fill="#dcdcdc" stroke="#555" stroke-width="0.6"/></svg><svg class=a style="left:53px;top:167px;" width="18" height="18" viewBox="0 0 18 18"><rect x="0.6" y="0.6" width="16.8" height="16.8" rx="1" fill="#fff" stroke="#1c3c5c" stroke-width="1.2"/><rect x="0.6" y="0.6" width="16.8" height="3" fill="#2f77b5"/><rect x="3" y="6" width="3" height="2" fill="#2f77b5"/><rect x="3" y="10" width="3" height="2" fill="#2f77b5"/><rect x="3" y="14" width="3" height="2" fill="#2f77b5"/><path d="M8 7H15M8 11H15M8 15H15" stroke="#1c3c5c" stroke-width="1.1"/></svg><svg class=a style="left:225px;top:170px;" width="9" height="11" viewBox="0 0 9 11"><path d="M2 1L7 5.5L2 10" stroke="#333" stroke-width="1.8" fill="none"/></svg><div class=a style="left:5px;top:189px;width:232px;height:26px;background:#f7f7f7;border:1px solid #d0d0d0"></div><svg class=a style="left:8px;top:194px;" width="17" height="19" viewBox="0 0 17 19"><path d="M1 2H16L10 9V17L7 14V9Z" fill="#fff" stroke="#333" stroke-width="1.2"/><path d="M2 2H15" stroke="#2f77b5" stroke-width="2.2"/></svg><div class=t style="left:27.00px;top:221.29px;font-size:12px;line-height:1;font-weight:400;color:#151515;font-family:'Liberation Sans',sans-serif;transform:scaleX(0.9303);transform-origin:0 0;">PM009492</div><svg class=a style="left:4px;top:218.5px;" width="19" height="16" viewBox="0 0 19 16"><rect x="0.6" y="0.6" width="17" height="14.8" rx="2" fill="#fafafa" stroke="#333" stroke-width="1.2"/><rect x="2.5" y="2.5" width="8.5" height="3" fill="#f5c816" stroke="#6a5200" stroke-width="0.8"/><rect x="12" y="2.2" width="3.6" height="3.2" fill="#f5c816" stroke="#6a5200" stroke-width="0.8"/><rect x="5.5" y="5.5" width="3" height="3.5" fill="#f5c816"/><rect x="2.5" y="8.8" width="9" height="4.2" fill="#f5c816" stroke="#6a5200" stroke-width="0.8"/><rect x="13" y="8" width="3" height="6.2" fill="#dcdcdc" stroke="#555" stroke-width="0.6"/></svg><div class=t style="left:50.00px;top:243.29px;font-size:12px;line-height:1;font-weight:400;color:#151515;font-family:'Liberation Sans',sans-serif;transform:scaleX(1.0254);transform-origin:0 0;">Annotations</div><svg class=a style="left:27px;top:239.5px;" width="18" height="18" viewBox="0 0 18 18"><path d="M0.6 3H6L7.5 1H17.4V17.4H0.6Z" fill="#e8eef5" stroke="#445" stroke-width="1.1"/><text x="4" y="15.5" font-size="12" font-weight="bold" font-family="Liberation Serif" fill="#2a5d9a">A</text></svg><div class=t style="left:50.00px;top:265.29px;font-size:12px;line-height:1;font-weight:400;color:#151515;font-family:'Liberation Sans',sans-serif;transform:scaleX(0.8936);transform-origin:0 0;">Sheet1</div><svg class=a style="left:27px;top:261.5px;" width="20" height="17" viewBox="0 0 20 17"><rect x="0.7" y="0.7" width="18.6" height="15.6" rx="1.5" fill="#f2f2f2" stroke="#444" stroke-width="1.2"/><rect x="2.5" y="2.5" width="15" height="12" fill="#f8f8f8" stroke="#bbb" stroke-width="0.8"/><path d="M8.5 9H17M8.5 11.5H17M11 9V14.5M14 9V11.5" stroke="#bbb" stroke-width="0.8"/></svg><svg class=a style="left:8px;top:266.5px;" width="8" height="6" viewBox="0 0 8 6"><path d="M0 0H7L3.5 5Z" fill="#555"/></svg><div class=t style="left:73.00px;top:287.29px;font-size:12px;line-height:1;font-weight:400;color:#151515;font-family:'Liberation Sans',sans-serif;transform:scaleX(0.9449);transform-origin:0 0;">Sheet Format1</div><svg class=a style="left:49px;top:283.5px;" width="20" height="17" viewBox="0 0 20 17"><rect x="0.7" y="0.7" width="18.6" height="15.6" rx="1.5" fill="#f2f2f2" stroke="#444" stroke-width="1.2"/><path d="M2.5 14.5V6H5V2.5H17.5V14.5Z" fill="#f8f8f8" stroke="#bbb" stroke-width="0.8"/><path d="M8.5 9H17M8.5 11.5H17M11 9V14.5M14 9V11.5" stroke="#bbb" stroke-width="0.8"/></svg><svg class=a style="left:33px;top:287.5px;" width="6" height="9" viewBox="0 0 6 9"><path d="M0 0V8L5 4Z" fill="#555"/></svg><div class=t style="left:73.00px;top:309.29px;font-size:12px;line-height:1;font-weight:400;color:#151515;font-family:'Liberation Sans',sans-serif;transform:scaleX(0.9695);transform-origin:0 0;">Drawing View11</div><svg class=a style="left:50px;top:305.0px;" width="18" height="18" viewBox="0 0 18 18"><path d="M0.7 0.7H12L17.3 6V17.3H0.7Z" fill="#ececec" stroke="#222" stroke-width="1.3"/><path d="M4.5 7.5 C4 5 6 3.5 8 4.5 C9 2.5 12.5 3 12.5 5.5 C14.5 6 14.5 9 13 10 C13.5 12.5 11 13.5 9.5 12.5 C7.5 13.5 5 12.5 5.5 10.5 C4 10 3.8 8.5 4.5 7.5Z" fill="#f2c21a" stroke="#7a5a00" stroke-width="0.9"/></svg><svg class=a style="left:33px;top:309.5px;" width="6" height="9" viewBox="0 0 6 9"><path d="M0 0V8L5 4Z" fill="#555"/></svg><div class=t style="left:73.00px;top:331.29px;font-size:12px;line-height:1;font-weight:400;color:#151515;font-family:'Liberation Sans',sans-serif;transform:scaleX(0.9595);transform-origin:0 0;">Drawing View12</div><svg class=a style="left:53px;top:327.0px;" width="12" height="19" viewBox="0 0 12 19"><rect x="0.7" y="0.7" width="9.5" height="4.3" rx="1.2" fill="#f4f4f4" stroke="#222" stroke-width="1.2"/><path d="M5.5 0.7V5" stroke="#222" stroke-width="1"/><path d="M0.7 8H2.2M4 8H5.5M7.4 8H8.9" stroke="#2a6f9e" stroke-width="1.8"/><path d="M0.7 11.2H7L10 14.2V17.8H0.7Z" fill="#e8e8e8" stroke="#222" stroke-width="1.2"/><path d="M9 10.5L10 11.5" stroke="#2a6f9e" stroke-width="1.5"/></svg><svg class=a style="left:33px;top:331.5px;" width="6" height="9" viewBox="0 0 6 9"><path d="M0 0V8L5 4Z" fill="#555"/></svg><div class=t style="left:73.00px;top:353.29px;font-size:12px;line-height:1;font-weight:400;color:#151515;font-family:'Liberation Sans',sans-serif;transform:scaleX(0.9595);transform-origin:0 0;">Drawing View13</div><svg class=a style="left:53px;top:349.0px;" width="12" height="19" viewBox="0 0 12 19"><rect x="0.7" y="0.7" width="9.5" height="4.3" rx="1.2" fill="#f4f4f4" stroke="#222" stroke-width="1.2"/><path d="M5.5 0.7V5" stroke="#222" stroke-width="1"/><path d="M0.7 8H2.2M4 8H5.5M7.4 8H8.9" stroke="#2a6f9e" stroke-width="1.8"/><path d="M0.7 11.2H7L10 14.2V17.8H0.7Z" fill="#e8e8e8" stroke="#222" stroke-width="1.2"/><path d="M9 10.5L10 11.5" stroke="#2a6f9e" stroke-width="1.5"/></svg><svg class=a style="left:33px;top:353.5px;" width="6" height="9" viewBox="0 0 6 9"><path d="M0 0V8L5 4Z" fill="#555"/></svg><div class=t style="left:73.00px;top:375.29px;font-size:12px;line-height:1;font-weight:400;color:#151515;font-family:'Liberation Sans',sans-serif;transform:scaleX(0.9595);transform-origin:0 0;">Drawing View14</div><svg class=a style="left:50px;top:371.0px;" width="18" height="18" viewBox="0 0 18 18"><path d="M0.7 0.7H12L17.3 6V17.3H0.7Z" fill="#ececec" stroke="#222" stroke-width="1.3"/><path d="M4.5 7.5 C4 5 6 3.5 8 4.5 C9 2.5 12.5 3 12.5 5.5 C14.5 6 14.5 9 13 10 C13.5 12.5 11 13.5 9.5 12.5 C7.5 13.5 5 12.5 5.5 10.5 C4 10 3.8 8.5 4.5 7.5Z" fill="#f2c21a" stroke="#7a5a00" stroke-width="0.9"/></svg><svg class=a style="left:33px;top:375.5px;" width="6" height="9" viewBox="0 0 6 9"><path d="M0 0V8L5 4Z" fill="#555"/></svg><div class=t style="left:73.00px;top:397.29px;font-size:12px;line-height:1;font-weight:400;color:#151515;font-family:'Liberation Sans',sans-serif;transform:scaleX(0.9467);transform-origin:0 0;">Revision Table1</div><svg class=a style="left:50px;top:391.5px;" width="20" height="21" viewBox="0 0 20 21"><rect x="0.7" y="0.7" width="13" height="11.5" rx="1" fill="#fff" stroke="#333" stroke-width="1.1"/><rect x="0.7" y="0.7" width="13" height="2.8" fill="#3d7fb0"/><path d="M0.7 6.5H13.7M0.7 9.3H13.7M5 3.5V12.2M9.3 3.5V12.2" stroke="#555" stroke-width="0.8"/><path d="M11 9.5L18.5 20H3.5Z" fill="#fafafa" stroke="#333" stroke-width="1"/><text x="9.3" y="19" font-size="7" font-weight="bold" fill="#111">1</text></svg><div class=t style="left:50.00px;top:419.29px;font-size:12px;line-height:1;font-weight:400;color:#151515;font-family:'Liberation Sans',sans-serif;transform:scaleX(0.9769);transform-origin:0 0;">Bill of Materials1</div><svg class=a style="left:27px;top:413.5px;" width="20" height="21" viewBox="0 0 20 21"><rect x="0.7" y="0.7" width="13" height="11.5" rx="1" fill="#fff" stroke="#333" stroke-width="1.1"/><rect x="0.7" y="0.7" width="13" height="2.8" fill="#3d7fb0"/><path d="M0.7 6.5H13.7M0.7 9.3H13.7M5 3.5V12.2M9.3 3.5V12.2" stroke="#555" stroke-width="0.8"/><path d="M6 12.5L10 9.5H12V13H18V17.5L15 20.3H9Z" fill="#f2c21a" stroke="#333" stroke-width="1"/><path d="M12 8.5L14 7H19V12L17.5 13.2H12Z" fill="#5fb0e0" stroke="#333" stroke-width="0.9"/></svg><div class=a style="left:1593px;top:117px;width:327px;height:942px;background:#f0f0f0;"></div><div class=a style="left:1598px;top:140px;width:322px;height:919px;background:#f0f0f0;border:1px solid #7d8a9a"></div><div class=a style="left:1593px;top:117px;width:327px;height:22px;background:#a9a9ac;"></div><div class=a style="left:1593px;top:116px;width:327px;height:1px;background:#8a8a8a;"></div><div class=a style="left:1593px;top:139px;width:327px;height:1px;background:#1e2a33;"></div><svg class=a style="left:1601px;top:122px;" width="13" height="11" viewBox="0 0 13 11"><path d="M6 1L2 5.5L6 10M11 1L7 5.5L11 10" stroke="#111" stroke-width="2" fill="none"/></svg><div class=t style="left:1660.00px;top:121.59px;font-size:12px;line-height:1;font-weight:700;color:#141414;font-family:'Liberation Sans',sans-serif;transform:scaleX(0.9693);transform-origin:0 0;">Tasks(Auto-generate drawings)</div><svg class=a style="left:1878px;top:119px;" width="18" height="18" viewBox="0 0 18 18"><path d="M14.88 7.81 L16.55 8.09 L16.55 9.91 L14.88 10.19 L14.55 11.28 L14.00 12.32 L14.98 13.69 L13.69 14.98 L12.32 14.00 L11.31 14.54 L10.19 14.88 L9.91 16.55 L8.09 16.55 L7.81 14.88 L6.72 14.55 L5.68 14.00 L4.31 14.98 L3.02 13.69 L4.00 12.32 L3.46 11.31 L3.12 10.19 L1.45 9.91 L1.45 8.09 L3.12 7.81 L3.45 6.72 L4.00 5.68 L3.02 4.31 L4.31 3.02 L5.68 4.00 L6.69 3.46 L7.81 3.12 L8.09 1.45 L9.91 1.45 L10.19 3.12 L11.28 3.45 L12.32 4.00 L13.69 3.02 L14.98 4.31 L14.00 5.68 L14.54 6.69Z" fill="#fafafa" stroke="#1a1a1a" stroke-width="1.3" stroke-linejoin="round"/><circle cx="9" cy="9" r="2.7" fill="#bbb" stroke="#1a1a1a" stroke-width="1.2"/></svg><svg class=a style="left:1897px;top:122px;" width="19" height="12" viewBox="0 0 19 12"><path d="M2 6.5H8.5" stroke="#111" stroke-width="1.3"/><path d="M8.2 2.3V10.6L13.6 6.5Z M16.8 3V9.8L13.6 6.5Z" fill="#111"/></svg><div class=a style="left:1593px;top:140px;width:5px;height:919px;background:#fafafa;"></div><div class=a style="left:1598px;top:140px;width:1px;height:919px;background:#7d8a9a;"></div><div class=a style="left:1599px;top:140px;width:1px;height:919px;background:#e6f2fc;"></div><div class=a style="left:1599px;top:141px;width:321px;height:27px;background:#fbfbfb;"></div><div class=a style="left:1599px;top:157px;width:321px;height:11px;background:#f1f2f4;"></div><div class=a style="left:1599px;top:140px;width:6px;height:28px;background:#f0f0f0;"></div><div class=a style="left:1739px;top:142px;width:1px;height:25px;background:#e2e2e2;"></div><div class=a style="left:1828px;top:142px;width:1px;height:25px;background:#e2e2e2;"></div><div class=t style="left:1660.00px;top:148.17px;font-size:13px;line-height:1;font-weight:400;color:#111;font-family:'Liberation Sans',sans-serif;transform:scaleX(1.0383);transform-origin:0 0;">Title</div><div class=t style="left:1765.50px;top:148.17px;font-size:13px;line-height:1;font-weight:400;color:#111;font-family:'Liberation Sans',sans-serif;">Status</div><div class=t style="left:1854.00px;top:148.17px;font-size:13px;line-height:1;font-weight:400;color:#111;font-family:'Liberation Sans',sans-serif;transform:scaleX(1.0791);transform-origin:0 0;">Action</div><div class=a style="left:1605px;top:168px;width:313px;height:26.5px;background:#f0f0f0;"></div><div class=t style="left:1640.25px;top:174.82px;font-size:13px;line-height:1;font-weight:400;color:#0a0a0a;font-family:'Liberation Sans',sans-serif;transform:scaleX(1.0256);transform-origin:0 0;">PM009492</div><svg class=a style="left:1776.5px;top:173.65px;" width="14" height="14" viewBox="0 0 14 14"><circle cx="7" cy="7" r="6.8" fill="#3fb550"/><path d="M3.6 7.2L6 9.5L10.4 4.8" stroke="#fff" stroke-width="1.8" fill="none"/></svg><div class=t style="left:1856.50px;top:175.22px;font-size:13px;line-height:1;font-weight:400;color:#0a0a0a;font-family:'Liberation Sans',sans-serif;transform:scaleX(1.0688);transform-origin:0 0;">Open</div><div class=a style="left:1856.5px;top:188.25px;width:34px;height:1px;background:#111;"></div><div class=a style="left:1605px;top:194.5px;width:313px;height:28.0px;background:#4a8ef0;"></div><div class=t style="left:1640.25px;top:202.07px;font-size:13px;line-height:1;font-weight:400;color:#0a0a0a;font-family:'Liberation Sans',sans-serif;transform:scaleX(1.0256);transform-origin:0 0;">PM009495</div><svg class=a style="left:1776.5px;top:200.9px;" width="14" height="14" viewBox="0 0 14 14"><circle cx="7" cy="7" r="6.8" fill="#3fb550"/><path d="M3.6 7.2L6 9.5L10.4 4.8" stroke="#fff" stroke-width="1.8" fill="none"/></svg><div class=t style="left:1856.50px;top:202.47px;font-size:13px;line-height:1;font-weight:400;color:#0a0a0a;font-family:'Liberation Sans',sans-serif;transform:scaleX(1.0688);transform-origin:0 0;">Open</div><div class=a style="left:1856.5px;top:215.5px;width:34px;height:1px;background:#111;"></div><div class=a style="left:1605px;top:222.5px;width:313px;height:27.5px;background:#ffffff;"></div><div class=t style="left:1640.25px;top:229.82px;font-size:13px;line-height:1;font-weight:400;color:#0a0a0a;font-family:'Liberation Sans',sans-serif;transform:scaleX(1.0256);transform-origin:0 0;">PM009494</div><svg class=a style="left:1776.5px;top:228.65px;" width="14" height="14" viewBox="0 0 14 14"><circle cx="7" cy="7" r="6.8" fill="#3fb550"/><path d="M3.6 7.2L6 9.5L10.4 4.8" stroke="#fff" stroke-width="1.8" fill="none"/></svg><div class=t style="left:1856.50px;top:230.22px;font-size:13px;line-height:1;font-weight:400;color:#0a0a0a;font-family:'Liberation Sans',sans-serif;transform:scaleX(1.0688);transform-origin:0 0;">Open</div><div class=a style="left:1856.5px;top:243.25px;width:34px;height:1px;background:#111;"></div><div class=a style="left:1598px;top:168px;width:7px;height:27px;background:#eef6fc;border-left:1px solid #b9dcf5"></div><div class=a style="left:1605px;top:168px;width:314px;height:1.6px;background:#0b0b0b;"></div><div class=a style="left:1605px;top:194px;width:314px;height:1.6px;background:#0b0b0b;"></div><div class=a style="left:1605px;top:222px;width:314px;height:1.6px;background:#0b0b0b;"></div><div class=a style="left:1605px;top:249px;width:314px;height:1.6px;background:#0b0b0b;"></div><div class=a style="left:1739px;top:168px;width:1.6px;height:82px;background:#0b0b0b;"></div><div class=a style="left:1828px;top:168px;width:1.6px;height:82px;background:#0b0b0b;"></div><div class=a style="left:1918px;top:168px;width:1.6px;height:82px;background:#0b0b0b;"></div><svg class=a style="left:1851px;top:198px;" width="18" height="24" viewBox="0 0 18 24"><path d="M6 2 C6 0.5 8.5 0.5 8.5 2 V10 C9 8.5 11 8.8 11 10 C11.5 8.8 13.5 9 13.5 10.5 C14 9.5 16 9.8 16 11.5 V17 C16 20 14 22 11 22 H9 C6.5 22 5 20 3 17 L1.2 13.5 C0.6 12 2.5 11 3.5 12.2 L6 15Z" fill="#fff" stroke="#111" stroke-width="1.1"/></svg><div class=a style="left:0px;top:0px;width:1920px;height:35px;background:#f5f5f5;"></div><div class=a style="left:0px;top:0px;width:1920px;height:1px;background:#c4c4c4;"></div><div class=a style="left:0px;top:34px;width:1920px;height:1px;background:#d0d0d0;"></div><svg class=a style="left:0px;top:0px;" width="30" height="30" viewBox="0 0 30 30"><path d="M12 5.8 L19.6 6.3 Q20.8 7.2 19.2 9.2 L13.6 12.9" stroke="#b8262a" stroke-width="1.7" fill="none" stroke-linecap="round"/><path d="M7.3 15.4 L14.4 15.1 Q15.8 16 13.8 19 Q10.5 23 5.2 24.8 M9.9 17.6 L5.4 24.4" stroke="#c42a2c" stroke-width="1.6" fill="none" stroke-linecap="round"/><path d="M25 12.4 L18.3 12.7 Q17.4 14.2 20.2 16.3 Q24.2 19.2 22.6 21.6 Q21.6 22.7 15.4 22.6" stroke="#c42a2c" stroke-width="1.7" fill="none" stroke-linecap="round"/></svg><div class=t style="left:30.30px;top:12.59px;font-size:12px;line-height:1;font-weight:700;color:#c02a2a;font-family:'Liberation Sans',sans-serif;transform:scaleX(1.0908);transform-origin:0 0;font-style:italic">SOLID</div><div class=t style="left:70.00px;top:12.59px;font-size:12px;line-height:1;font-weight:400;color:#c8302c;font-family:'Liberation Sans',sans-serif;transform:scaleX(0.9263);transform-origin:0 0;font-style:italic">WORKS</div><div class=t style="left:117.00px;top:12.59px;font-size:12px;line-height:1;font-weight:400;color:#c8302c;font-family:'Liberation Sans',sans-serif;transform:scaleX(1.0957);transform-origin:0 0;font-style:italic">Connected</div><svg class=a style="left:199px;top:13px;" width="7" height="10" viewBox="0 0 7 10"><path d="M0 0L6 5L0 10Z" fill="#7a7a7a"/></svg><div class=a style="left:211px;top:1px;width:1px;height:33px;background:#cfcfcf;"></div><svg class=a style="left:238px;top:8px;" width="20" height="19" viewBox="0 0 20 19"><path d="M2 9 L10 2 L18 9" stroke="#2a5d8a" stroke-width="2.2" fill="none"/><path d="M4.5 8 V17 H15.5 V8" stroke="#333" stroke-width="1.4" fill="#fff"/><rect x="8" y="11" width="4" height="6" fill="#fff" stroke="#333" stroke-width="1.2"/></svg><svg class=a style="left:270px;top:9px;" width="16" height="18" viewBox="0 0 16 18"><path d="M1 1 H10 L15 6 V17 H1 Z" fill="#fafafa" stroke="#333" stroke-width="1.2"/><path d="M10 1V6H15" fill="none" stroke="#333" stroke-width="1"/></svg><svg class=a style="left:296px;top:16px;" width="7" height="4" viewBox="0 0 7 4"><path d="M0 0H7L3.5 4Z" fill="#555"/></svg><svg class=a style="left:311px;top:8px;" width="21" height="19" viewBox="0 0 21 19"><path d="M1 5 H6 L8 7 H17 V17 H1 Z" fill="#e8e8e8" stroke="#333" stroke-width="1.2"/><path d="M1 17 L4 10 H20 L17 17 Z" fill="#fff" stroke="#333" stroke-width="1.2"/><path d="M9 1 C14 1 15 4 15 8 M12 6 L15 9 L18 6" stroke="#2f77b5" stroke-width="2" fill="none"/></svg><svg class=a style="left:340px;top:16px;" width="7" height="4" viewBox="0 0 7 4"><path d="M0 0H7L3.5 4Z" fill="#555"/></svg><svg class=a style="left:357px;top:9px;" width="18" height="18" viewBox="0 0 18 18"><path d="M1 1 H15 L17 3 V17 H1 Z" fill="#2f6fa8" stroke="#1f3f60" stroke-width="1"/><rect x="4" y="2" width="9" height="5" fill="#fff"/><rect x="4" y="11" width="10" height="6" fill="#dfe8f0"/><rect x="6" y="12" width="2" height="4" fill="#333"/></svg><svg class=a style="left:384px;top:16px;" width="7" height="4" viewBox="0 0 7 4"><path d="M0 0H7L3.5 4Z" fill="#555"/></svg><svg class=a style="left:400px;top:9px;" width="20" height="18" viewBox="0 0 20 18"><rect x="4" y="1" width="12" height="5" fill="#fff" stroke="#333" stroke-width="1.2"/><rect x="1" y="6" width="18" height="8" rx="1" fill="#2f6fa8" stroke="#1f3f60"/><rect x="4" y="11" width="12" height="6" fill="#fff" stroke="#333" stroke-width="1.2"/></svg><svg class=a style="left:428px;top:16px;" width="7" height="4" viewBox="0 0 7 4"><path d="M0 0H7L3.5 4Z" fill="#555"/></svg><svg class=a style="left:445px;top:10px;" width="18" height="16" viewBox="0 0 18 16"><path d="M4 6 H11 C15 6 16 9 16 11 C16 13 15 15 12 15" stroke="#b8b8b8" stroke-width="2.4" fill="none"/><path d="M1 6 L6 1 V11 Z" fill="#b8b8b8"/></svg><svg class=a style="left:472px;top:16px;" width="7" height="4" viewBox="0 0 7 4"><path d="M0 0H7L3.5 4Z" fill="#999"/></svg><svg class=a style="left:489px;top:10px;" width="18" height="16" viewBox="0 0 18 16"><path d="M14 6 H7 C3 6 2 9 2 11 C2 13 3 15 6 15" stroke="#b8b8b8" stroke-width="2.4" fill="none"/><path d="M17 6 L12 1 V11 Z" fill="#b8b8b8"/></svg><svg class=a style="left:516px;top:16px;" width="7" height="4" viewBox="0 0 7 4"><path d="M0 0H7L3.5 4Z" fill="#999"/></svg><div class=a style="left:527px;top:3px;width:44px;height:30px;background:#fdfdfd;border:1px solid #9a9a9a"></div><div class=a style="left:528px;top:4px;width:30px;height:28px;background:#bdbdbd;"></div><div class=a style="left:557px;top:4px;width:1px;height:28px;background:#8a8a8a;"></div><svg class=a style="left:536px;top:9px;" width="14" height="18" viewBox="0 0 14 18"><path d="M1 1 L1 14 L4.5 11 L7 17 L9.5 16 L7 10 L12 10 Z" fill="#fff" stroke="#222" stroke-width="1.2" stroke-linejoin="round"/></svg><svg class=a style="left:560.5px;top:16px;" width="7" height="4" viewBox="0 0 7 4"><path d="M0 0H7L3.5 4Z" fill="#333"/></svg><svg class=a style="left:580px;top:9px;" width="12" height="18" viewBox="0 0 12 18"><rect x="1" y="0.5" width="10" height="17" rx="5" fill="#222"/><circle cx="6" cy="5" r="2.6" fill="#e02020"/><circle cx="6" cy="12.5" r="2.6" fill="#3ac03a"/></svg><svg class=a style="left:607px;top:9px;" width="18" height="18" viewBox="0 0 18 18"><rect x="1" y="1" width="16" height="16" fill="#fff" stroke="#224" stroke-width="1.3"/><rect x="3" y="4" width="3" height="2" fill="#2f77b5"/><rect x="3" y="8" width="3" height="2" fill="#2f77b5"/><rect x="3" y="12" width="3" height="2" fill="#2f77b5"/><path d="M8 5H15M8 9H15M8 13H15" stroke="#224" stroke-width="1.2"/></svg><svg class=a style="left:636px;top:9px;" width="19" height="18" viewBox="0 0 19 18"><circle cx="9.5" cy="9" r="5.5" fill="none" stroke="#444" stroke-width="2.8" stroke-dasharray="2.2 1.6"/><circle cx="9.5" cy="9" r="4.8" fill="none" stroke="#444" stroke-width="1.3"/><circle cx="9.5" cy="9" r="2.2" fill="none" stroke="#444" stroke-width="1.3"/></svg><svg class=a style="left:664px;top:16px;" width="7" height="4" viewBox="0 0 7 4"><path d="M0 0H7L3.5 4Z" fill="#555"/></svg><div class=t style="left:1111.00px;top:12.09px;font-size:12px;line-height:1;font-weight:400;color:#111;font-family:'Liberation Sans',sans-serif;transform:scaleX(0.9040);transform-origin:0 0;">PM009492 - Sheet1</div><svg class=a style="left:1680px;top:9px;" width="19" height="18" viewBox="0 0 19 18"><rect x="0" y="0" width="19" height="18" rx="1.5" fill="#4a4a4a"/><path d="M4 4.5 L9 8.5 L4 12.5" stroke="#fff" stroke-width="1.6" fill="none"/><path d="M10 14 H15" stroke="#fff" stroke-width="1.5"/></svg><svg class=a style="left:1711px;top:5px;" width="27" height="26" viewBox="0 0 27 26"><defs><clipPath id="avc"><circle cx="13.4" cy="12.6" r="12.4"/></clipPath></defs><circle cx="13.4" cy="12.6" r="12.4" fill="#d9251d"/><g clip-path="url(#avc)"><path d="M6 26 C6.5 20 9 18.5 13.4 18.5 C17.8 18.5 20.3 20 20.8 26Z" fill="#dceaf5"/><path d="M11.5 17 H15.3 V20.5 L13.4 22 L11.5 20.5Z" fill="#9a6a45"/><ellipse cx="13.4" cy="11.5" rx="4.6" ry="5.8" fill="#a8744c"/><path d="M8.5 11 C7.2 2.2 19.6 2.2 18.3 11 C17.8 7.6 16.2 7 13.4 7 C10.6 7 9 7.6 8.5 11Z" fill="#151515"/><path d="M10.3 14.6 C11.5 17.5 15.3 17.5 16.5 14.6 C15 15.4 11.8 15.4 10.3 14.6Z" fill="#3a2a20"/><path d="M10 10.8 H12.6 M14.2 10.8 H16.8" stroke="#2a2a2a" stroke-width="0.7"/></g></svg><svg class=a style="left:1751px;top:8px;" width="20" height="20" viewBox="0 0 20 20"><circle cx="10" cy="10" r="8.8" fill="none" stroke="#333" stroke-width="1.3"/><path d="M7 7.5 C7 4.5 13 4.5 13 7.5 C13 10 10 10 10 12.5" stroke="#333" stroke-width="1.5" fill="none"/><circle cx="10" cy="15" r="1" fill="#333"/></svg><div class=a style="left:1791px;top:22px;width:11px;height:2px;background:#333;"></div><svg class=a style="left:1826px;top:11px;" width="16" height="15" viewBox="0 0 16 15"><rect x="0.7" y="0.7" width="14.6" height="13.6" fill="none" stroke="#333" stroke-width="1.3"/><path d="M8 0.7V14.3" stroke="#333" stroke-width="0.9"/><path d="M2.5 7.5H13.5" stroke="#333" stroke-width="1.1"/><path d="M2.3 7.5L5 5.2V9.8Z M13.7 7.5L11 5.2V9.8Z" fill="#333"/></svg><svg class=a style="left:1862px;top:11px;" width="16" height="15" viewBox="0 0 16 15"><rect x="0.6" y="5.6" width="9.8" height="8.8" fill="#f5f5f5" stroke="#333" stroke-width="1.2"/><path d="M4.6 5.6V0.6H15.4V10.4H10.4" fill="none" stroke="#333" stroke-width="1.2"/></svg><svg class=a style="left:1899px;top:12px;" width="12" height="12" viewBox="0 0 12 12"><path d="M1 1L11 11M11 1L1 11" stroke="#333" stroke-width="1.4"/></svg><div class=a style="left:0px;top:35px;width:1920px;height:81px;background:#f5f5f5;"></div><div class=a style="left:0px;top:116px;width:1920px;height:1px;background:#9b9b9b;"></div><svg class=a style="left:15.5px;top:42px;" width="18" height="18" viewBox="0 0 18 18"><path d="M0.7 0.7H12L17.3 6V17.3H0.7Z" fill="#ececec" stroke="#222" stroke-width="1.3"/><path d="M4.5 7.5 C4 5 6 3.5 8 4.5 C9 2.5 12.5 3 12.5 5.5 C14.5 6 14.5 9 13 10 C13.5 12.5 11 13.5 9.5 12.5 C7.5 13.5 5 12.5 5.5 10.5 C4 10 3.8 8.5 4.5 7.5Z" fill="#f2c21a" stroke="#7a5a00" stroke-width="0.9"/><path d="M8 6.5 C9.5 6 11 7 10.5 8.5" stroke="#fff3a0" stroke-width="0.9" fill="none"/></svg><div class=t style="left:8.50px;top:62.91px;font-size:11px;line-height:1;font-weight:400;color:#1b1b2b;font-family:'Liberation Sans',sans-serif;transform:scaleX(1.0678);transform-origin:0 0;">Model</div><div class=t style="left:12.67px;top:75.91px;font-size:11px;line-height:1;font-weight:400;color:#1b1b2b;font-family:'Liberation Sans',sans-serif;">View</div><svg class=a style="left:66px;top:42px;" width="18" height="18" viewBox="0 0 18 18"><rect x="5.5" y="0.7" width="9" height="4.3" rx="1.2" fill="#f4f4f4" stroke="#222" stroke-width="1.2"/><path d="M10.5 0.7V5" stroke="#222" stroke-width="1"/><path d="M5.5 8H7M8.8 8H10.3M12.2 8H13.7" stroke="#2a6f9e" stroke-width="1.8"/><path d="M5.5 11.2H11.5L14.5 14.2V17.3H5.5Z" fill="#e8e8e8" stroke="#222" stroke-width="1.2"/><path d="M13.5 10.5L14.5 11.5" stroke="#2a6f9e" stroke-width="1.5"/></svg><div class=t style="left:51.60px;top:62.91px;font-size:11px;line-height:1;font-weight:400;color:#1b1b2b;font-family:'Liberation Sans',sans-serif;transform:scaleX(1.0068);transform-origin:0 0;">Projected</div><div class=t style="left:63.17px;top:75.91px;font-size:11px;line-height:1;font-weight:400;color:#1b1b2b;font-family:'Liberation Sans',sans-serif;">View</div><svg class=a style="left:121.5px;top:42px;" width="18" height="18" viewBox="0 0 18 18"><path d="M7 6L11.5 1.5L17 7L12.5 11.5Z" fill="#dcdcdc" stroke="#666" stroke-width="1"/><path d="M9.2 3.8L14.7 9.2M11.5 8.5L14 6" stroke="#888" stroke-width="0.8"/><path d="M1.5 9.5L4 7M5 13L8 10M9 15L12 12" stroke="#2a6f9e" stroke-width="1.4" stroke-dasharray="1.4 1.2"/><path d="M0.7 12.5H7.5L9.5 14.5V17.3H0.7Z" fill="#ececec" stroke="#222" stroke-width="1.2"/></svg><div class=t style="left:109.00px;top:62.91px;font-size:11px;line-height:1;font-weight:400;color:#1b1b2b;font-family:'Liberation Sans',sans-serif;transform:scaleX(1.0342);transform-origin:0 0;">Auxiliary</div><div class=t style="left:118.67px;top:75.91px;font-size:11px;line-height:1;font-weight:400;color:#1b1b2b;font-family:'Liberation Sans',sans-serif;">View</div><svg class=a style="left:172px;top:42px;" width="18" height="18" viewBox="0 0 18 18"><path d="M4 4.3L8 0.2V8.5Z M4 13.6L8 9.5V17.7Z" fill="#222"/><path d="M7.5 4.3H13.8M7.5 13.6H13.8" stroke="#222" stroke-width="2"/><path d="M12.8 3.5V6.5M12.8 8.2V10.8M12.8 12.5V14.5" stroke="#222" stroke-width="2"/></svg><div class=t style="left:162.50px;top:62.91px;font-size:11px;line-height:1;font-weight:400;color:#1b1b2b;font-family:'Liberation Sans',sans-serif;transform:scaleX(1.0081);transform-origin:0 0;">Section</div><div class=t style="left:169.17px;top:75.91px;font-size:11px;line-height:1;font-weight:400;color:#1b1b2b;font-family:'Liberation Sans',sans-serif;">View</div><svg class=a style="left:224px;top:42px;" width="18" height="18" viewBox="0 0 18 18"><circle cx="12" cy="5.8" r="5.2" fill="#4a9cc8" stroke="#17455f" stroke-width="1.3"/><path d="M8.3 7.5L13 2.8M9.6 9.3L14.8 4.1M11.8 10.2L15.8 6.2" stroke="#9fd2ec" stroke-width="0.9"/><path d="M0.5 17.5L1.5 16.5M3 15L6.5 11.5" stroke="#222" stroke-width="1.6"/><path d="M7.5 10.5L3.5 11.2L6.8 14.5Z" fill="#222"/></svg><div class=t style="left:210.00px;top:62.91px;font-size:11px;line-height:1;font-weight:400;color:#1b1b2b;font-family:'Liberation Sans',sans-serif;transform:scaleX(0.9771);transform-origin:0 0;">Removed</div><div class=t style="left:214.50px;top:75.91px;font-size:11px;line-height:1;font-weight:400;color:#1b1b2b;font-family:'Liberation Sans',sans-serif;transform:scaleX(1.0081);transform-origin:0 0;">Section</div><svg class=a style="left:272.5px;top:42px;" width="18" height="18" viewBox="0 0 18 18"><path d="M12.5 3.2 C9.5 0 2 1 2 9 C2 16 9.5 18 12.5 14.5" stroke="#222" stroke-width="1.8" fill="none"/><text x="7.5" y="13.5" font-size="10.5" font-family="Liberation Serif" fill="#222">A</text></svg><div class=t style="left:267.00px;top:62.91px;font-size:11px;line-height:1;font-weight:400;color:#1b1b2b;font-family:'Liberation Sans',sans-serif;transform:scaleX(1.0311);transform-origin:0 0;">Detail</div><div class=t style="left:269.67px;top:75.91px;font-size:11px;line-height:1;font-weight:400;color:#1b1b2b;font-family:'Liberation Sans',sans-serif;">View</div><svg class=a style="left:317.5px;top:42px;" width="18" height="18" viewBox="0 0 18 18"><path d="M0.7 0.7H12L17.3 6V17.3H0.7Z" fill="#ececec" stroke="#222" stroke-width="1.3"/><path d="M4.5 7.5 C4 5 6 3.5 8 4.5 C9 2.5 12.5 3 12.5 5.5 C14.5 6 14.5 9 13 10 C13.5 12.5 11 13.5 9.5 12.5 C7.5 13.5 5 12.5 5.5 10.5 C4 10 3.8 8.5 4.5 7.5Z" fill="#f2c21a" stroke="#7a5a00" stroke-width="0.9"/><path d="M8 6.5 C9.5 6 11 7 10.5 8.5" stroke="#fff3a0" stroke-width="0.9" fill="none"/><path d="M2 16L6 12M2 13.5V16H4.5M16 2L12 6M13.5 2H16V4.5" stroke="#222" stroke-width="1.3" fill="none"/></svg><div class=t style="left:307.00px;top:62.91px;font-size:11px;line-height:1;font-weight:400;color:#1b1b2b;font-family:'Liberation Sans',sans-serif;transform:scaleX(0.9811);transform-origin:0 0;">Relative</div><div class=t style="left:314.67px;top:75.91px;font-size:11px;line-height:1;font-weight:400;color:#1b1b2b;font-family:'Liberation Sans',sans-serif;">View</div><svg class=a style="left:374px;top:42px;" width="18" height="18" viewBox="0 0 18 18"><rect x="0.6" y="0.6" width="9.4" height="4" rx="1" fill="#f4f4f4" stroke="#222" stroke-width="1.1"/><path d="M6 0.6V4.6" stroke="#222"/><path d="M0.6 7.5H2.2M4.2 7.5H5.8M7.8 7.5H9.4" stroke="#2a6f9e" stroke-width="1.6"/><path d="M0.6 11.3H7L9.2 13.5V17.4H0.6Z" fill="#e8e8e8" stroke="#222" stroke-width="1.1"/><path d="M11.8 10.5V12M11.8 13.5V15M11.8 16.2V17.5M9.8 10.2H11" stroke="#2a6f9e" stroke-width="1.4"/><rect x="14.3" y="10.6" width="3.2" height="6.8" rx="0.8" fill="#f4f4f4" stroke="#222" stroke-width="1.1"/><path d="M14.3 14H17.5" stroke="#222"/></svg><div class=t style="left:360.00px;top:62.91px;font-size:11px;line-height:1;font-weight:400;color:#1b1b2b;font-family:'Liberation Sans',sans-serif;transform:scaleX(1.0301);transform-origin:0 0;">Standard</div><div class=t style="left:366.00px;top:75.91px;font-size:11px;line-height:1;font-weight:400;color:#1b1b2b;font-family:'Liberation Sans',sans-serif;transform:scaleX(1.0357);transform-origin:0 0;">3 View</div><svg class=a style="left:440px;top:42px;" width="18" height="18" viewBox="0 0 18 18"><rect x="0.7" y="0.7" width="16.6" height="16.6" fill="#f4f4f4" stroke="#23506e" stroke-width="1.4"/><path d="M1.4 4.5H16.6V16.6H13.5V13.5H10.5V10.5H7.5V7.5H4.5V4.5" fill="#86c3e3" stroke="#23506e" stroke-width="1.1"/><rect x="3" y="1.4" width="12" height="3" fill="#e8e8e8"/><path d="M8 4.5V8.5" stroke="#23506e" stroke-width="1.5"/><path d="M11.5 16L16 11.5M9 12L14 7M12 6L15 3" stroke="#fff" stroke-width="0.9"/></svg><div class=t style="left:420.25px;top:62.91px;font-size:11px;line-height:1;font-weight:400;color:#1b1b2b;font-family:'Liberation Sans',sans-serif;transform:scaleX(1.0685);transform-origin:0 0;">Broken-out</div><div class=t style="left:430.50px;top:75.91px;font-size:11px;line-height:1;font-weight:400;color:#1b1b2b;font-family:'Liberation Sans',sans-serif;transform:scaleX(1.0081);transform-origin:0 0;">Section</div><svg class=a style="left:493px;top:42px;" width="18" height="18" viewBox="0 0 18 18"><path d="M0.7 3H4.5 M4.5 14.5H0.7V3" stroke="#222" stroke-width="1.3" fill="#eee"/><rect x="0.7" y="3" width="4.5" height="11.5" fill="#eee" stroke="#222" stroke-width="1.3"/><path d="M11.5 3H12.5L17.3 8V14.5H11.5Z" fill="#e4e4e4" stroke="#222" stroke-width="1.3"/><path d="M6 0.5 C3.5 4 8 7 5.5 10 C4 12 5.5 15 4.5 17.5M11 0.5 C8.5 4 13 7 10.5 10 C9 12 10.5 15 9.5 17.5" stroke="#2a6f9e" stroke-width="1.7" fill="none"/></svg><div class=t style="left:488.25px;top:62.91px;font-size:11px;line-height:1;font-weight:400;color:#1b1b2b;font-family:'Liberation Sans',sans-serif;transform:scaleX(0.9565);transform-origin:0 0;">Break</div><div class=t style="left:490.17px;top:75.91px;font-size:11px;line-height:1;font-weight:400;color:#1b1b2b;font-family:'Liberation Sans',sans-serif;">View</div><svg class=a style="left:529px;top:42px;" width="18" height="18" viewBox="0 0 18 18"><path d="M0.7 0.7H12L17.3 6V17.3H0.7Z" fill="#ececec" stroke="#222" stroke-width="1.3"/><path d="M1.5 14.5H9" stroke="#2a6f9e" stroke-width="1" stroke-dasharray="1.5 1"/><path d="M9.5 17V11.5H12.5V8.5H15.5V5" stroke="#2a6f9e" stroke-width="1.8" fill="none" stroke-dasharray="2 1"/></svg><div class=t style="left:525.75px;top:62.91px;font-size:11px;line-height:1;font-weight:400;color:#1b1b2b;font-family:'Liberation Sans',sans-serif;transform:scaleX(1.0275);transform-origin:0 0;">Crop</div><div class=t style="left:526.17px;top:75.91px;font-size:11px;line-height:1;font-weight:400;color:#1b1b2b;font-family:'Liberation Sans',sans-serif;">View</div><svg class=a style="left:575px;top:42px;" width="18" height="18" viewBox="0 0 18 18"><rect x="0.7" y="0.5" width="4" height="17" fill="#eee" stroke="#222" stroke-width="1.2"/><path d="M4.7 3.7H11.5M4.7 5.3H11.5" stroke="#222" stroke-width="0.9"/><rect x="11.6" y="1.3" width="6" height="5.6" fill="#eee" stroke="#222" stroke-width="1.2"/><path d="M4.7 12.5H11" stroke="#222" stroke-width="1" stroke-dasharray="1.5 1"/><rect x="11.3" y="9.8" width="6.2" height="6.6" fill="none" stroke="#222" stroke-width="1.1" stroke-dasharray="1.6 1.2"/></svg><div class=t style="left:560.75px;top:62.91px;font-size:11px;line-height:1;font-weight:400;color:#1b1b2b;font-family:'Liberation Sans',sans-serif;transform:scaleX(1.0561);transform-origin:0 0;">Alternate</div><div class=t style="left:563.25px;top:75.91px;font-size:11px;line-height:1;font-weight:400;color:#1b1b2b;font-family:'Liberation Sans',sans-serif;transform:scaleX(1.0603);transform-origin:0 0;">Position</div><div class=t style="left:572.17px;top:88.91px;font-size:11px;line-height:1;font-weight:400;color:#1b1b2b;font-family:'Liberation Sans',sans-serif;">View</div><svg class=a style="left:627.5px;top:42px;" width="18" height="18" viewBox="0 0 18 18"><path d="M0.7 0.7H12L17.3 6V17.3H0.7Z" fill="#f0f0f0" stroke="#222" stroke-width="1.2" stroke-dasharray="1.8 1.3"/></svg><div class=t style="left:621.00px;top:62.91px;font-size:11px;line-height:1;font-weight:400;color:#1b1b2b;font-family:'Liberation Sans',sans-serif;transform:scaleX(0.9940);transform-origin:0 0;">Empty</div><div class=t style="left:624.67px;top:75.91px;font-size:11px;line-height:1;font-weight:400;color:#1b1b2b;font-family:'Liberation Sans',sans-serif;">View</div><svg class=a style="left:681px;top:42px;" width="18" height="18" viewBox="0 0 18 18"><path d="M0.7 0.7H12L17.3 6V17.3H0.7Z" fill="#ececec" stroke="#222" stroke-width="1.3"/><path d="M3 5H7L8 6H14V14H3Z" fill="#f8f8f8" stroke="#222" stroke-width="1.1"/><path d="M3 14L5 8.5H15.5L13.5 14Z" fill="#fff" stroke="#222" stroke-width="1"/></svg><div class=t style="left:662.25px;top:62.91px;font-size:11px;line-height:1;font-weight:400;color:#1b1b2b;font-family:'Liberation Sans',sans-serif;transform:scaleX(1.0429);transform-origin:0 0;">Predefined</div><div class=t style="left:678.17px;top:75.91px;font-size:11px;line-height:1;font-weight:400;color:#1b1b2b;font-family:'Liberation Sans',sans-serif;">View</div><svg class=a style="left:741px;top:42px;" width="18" height="18" viewBox="0 0 18 18"><path d="M0.7 0.7H12L17.3 6V17.3H0.7Z" fill="#f2f2f2" stroke="#d0d0d0" stroke-width="1.2"/><rect x="5.5" y="2.5" width="6" height="13" rx="3" fill="#d6d6d6"/><circle cx="8.5" cy="6" r="1.2" fill="#eee"/><circle cx="8.5" cy="12" r="1.2" fill="#eee"/></svg><div class=t style="left:731.50px;top:62.91px;font-size:11px;line-height:1;font-weight:400;color:#a8a8a8;font-family:'Liberation Sans',sans-serif;transform:scaleX(1.0427);transform-origin:0 0;">Update</div><div class=t style="left:738.17px;top:75.91px;font-size:11px;line-height:1;font-weight:400;color:#a8a8a8;font-family:'Liberation Sans',sans-serif;">View</div><svg class=a style="left:793px;top:42px;" width="18" height="18" viewBox="0 0 18 18"><path d="M0.7 7H5.5L7 9V17.3H3Z" fill="#ddd" stroke="#222" stroke-width="1.2"/><path d="M3 17.3L5.5 11H17L14.3 17.3Z" fill="#fafafa" stroke="#222" stroke-width="1.2"/><path d="M8.5 10V3.5M5.5 5.5L8.5 0.8L11.5 5.5Z" fill="#2a6f9e" stroke="#1a4a6a" stroke-width="1.2"/><path d="M13.5 1V7M10.8 5L13.5 9L16.2 5Z" fill="#2a6f9e" stroke="#1a4a6a" stroke-width="1.2"/></svg><div class=t style="left:782.00px;top:62.91px;font-size:11px;line-height:1;font-weight:400;color:#1b1b2b;font-family:'Liberation Sans',sans-serif;transform:scaleX(0.9911);transform-origin:0 0;">Replace</div><div class=t style="left:786.00px;top:75.91px;font-size:11px;line-height:1;font-weight:400;color:#1b1b2b;font-family:'Liberation Sans',sans-serif;transform:scaleX(1.0678);transform-origin:0 0;">Model</div><div class=a style="left:353px;top:37px;width:1px;height:76px;background:#d6d6d6;"></div><div class=a style="left:413px;top:37px;width:1px;height:76px;background:#d6d6d6;"></div><div class=a style="left:614px;top:37px;width:1px;height:76px;background:#d6d6d6;"></div><div class=a style="left:724px;top:37px;width:1px;height:76px;background:#d6d6d6;"></div><div class=a style="left:775px;top:37px;width:1px;height:76px;background:#d6d6d6;"></div><svg class=a style="left:1900px;top:99px;" width="12" height="8" viewBox="0 0 12 8"><path d="M1 7L6 2L11 7" stroke="#333" stroke-width="1.6" fill="none"/></svg><div class=t style="left:8.50px;top:121.79px;font-size:12px;line-height:1;font-weight:700;color:#1a1a2a;font-family:'Liberation Sans',sans-serif;transform:scaleX(0.9716);transform-origin:0 0;">Drawing</div><div class=a style="left:62.5px;top:116px;width:76.5px;height:23px;background:#d8d8d8;border:1px solid #8e9494;border-bottom:none"></div><div class=t style="left:71.00px;top:121.79px;font-size:12px;line-height:1;font-weight:400;color:#1a1a1a;font-family:'Liberation Sans',sans-serif;transform:scaleX(1.0368);transform-origin:0 0;">Annotation</div><div class=a style="left:138px;top:116px;width:57px;height:23px;background:#d8d8d8;border:1px solid #8e9494;border-bottom:none"></div><div class=t style="left:149.00px;top:121.79px;font-size:12px;line-height:1;font-weight:400;color:#1a1a1a;font-family:'Liberation Sans',sans-serif;transform:scaleX(0.9540);transform-origin:0 0;">Sketch</div><div class=a style="left:194px;top:116px;width:58px;height:23px;background:#d8d8d8;border:1px solid #8e9494;border-bottom:none"></div><div class=t style="left:202.50px;top:121.79px;font-size:12px;line-height:1;font-weight:400;color:#1a1a1a;font-family:'Liberation Sans',sans-serif;transform:scaleX(1.0246);transform-origin:0 0;">Markup</div><div class=a style="left:251px;top:116px;width:61px;height:23px;background:#d8d8d8;border:1px solid #8e9494;border-bottom:none"></div><div class=t style="left:259.50px;top:121.79px;font-size:12px;line-height:1;font-weight:400;color:#1a1a1a;font-family:'Liberation Sans',sans-serif;transform:scaleX(0.9421);transform-origin:0 0;">Evaluate</div><div class=a style="left:311px;top:116px;width:134px;height:23px;background:#d8d8d8;border:1px solid #8e9494;border-bottom:none"></div><div class=t style="left:319.50px;top:121.79px;font-size:12px;line-height:1;font-weight:400;color:#1a1a1a;font-family:'Liberation Sans',sans-serif;transform:scaleX(0.9332);transform-origin:0 0;">SOLIDWORKS Add-Ins</div><div class=a style="left:444px;top:116px;width:87.5px;height:23px;background:#d8d8d8;border:1px solid #8e9494;border-bottom:none"></div><div class=t style="left:453.00px;top:121.79px;font-size:12px;line-height:1;font-weight:400;color:#1a1a1a;font-family:'Liberation Sans',sans-serif;transform:scaleX(0.9559);transform-origin:0 0;">Sheet Format</div><div class=a style="left:530.5px;top:116px;width:158.5px;height:23px;background:#d8d8d8;border:1px solid #8e9494;border-bottom:none"></div><div class=t style="left:539.00px;top:121.79px;font-size:12px;line-height:1;font-weight:400;color:#1a1a1a;font-family:'Liberation Sans',sans-serif;transform:scaleX(0.9915);transform-origin:0 0;">Command Predictor (Beta)</div><div class=a style="left:0px;top:138px;width:688px;height:1px;background:#7b8585;"></div><div class=a style="left:0px;top:1044px;width:1593px;height:15px;background:#f5f5f5;"></div><div class=a style="left:0px;top:1043px;width:1593px;height:1px;background:#8f8f8f;"></div><div class=a style="left:0px;top:1058px;width:1593px;height:1px;background:#8f8f8f;"></div><div class=a style="left:0px;top:1044px;width:63px;height:14px;background:#d0d0d0;"></div><svg class=a style="left:0px;top:1044px;" width="64" height="14" viewBox="0 0 64 14"><g fill="#9a9a9a"><rect x="2" y="3" width="1.4" height="8"/><path d="M10 3V11L4 7Z"/><path d="M23 3V11L17 7Z"/><path d="M40 3V11L46 7Z"/><path d="M55 3V11L61 7Z"/><rect x="61" y="3" width="1.4" height="8"/></g><path d="M15 0V14M31 0V14M47 0V14" stroke="#e8e8e8"/></svg><div class=a style="left:64px;top:1044px;width:77px;height:15px;background:#fafafa;"></div><svg class=a style="left:76px;top:1045px;" width="15" height="13" viewBox="0 0 15 13"><path d="M1 1H8L12 5V12H1Z" fill="#fff" stroke="#111" stroke-width="1.2"/><path d="M5 8H14V12H5Z" fill="#fff" stroke="#111" stroke-width="1.1"/></svg><div class=t style="left:92.00px;top:1044.97px;font-size:13px;line-height:1;font-weight:700;color:#111;font-family:'Liberation Sans',sans-serif;transform:scaleX(0.9146);transform-origin:0 0;">Sheet1</div><div class=a style="left:141px;top:1044px;width:37px;height:15px;background:#cfcfcf;border-left:1px solid #b8b8b8;border-right:1px solid #b8b8b8"></div><svg class=a style="left:150px;top:1044px;" width="17" height="13" viewBox="0 0 17 13"><path d="M3 5H14V11H6L4 13V11H3Z" fill="#d8e6f0" stroke="#555" stroke-width="0.9"/><circle cx="4.5" cy="3.5" r="3" fill="#f6b820"/></svg><div class=a style="left:948px;top:1044px;width:2px;height:15px;background:#d0d0d0;"></div><svg class=a style="left:955px;top:1047px;" width="6" height="9" viewBox="0 0 6 9"><path d="M5 0V8L0 4Z" fill="#777"/></svg><div class=a style="left:0px;top:1059px;width:1920px;height:19px;background:#f5f5f5;"></div><div class=t style="left:2.00px;top:1063.79px;font-size:12px;line-height:1;font-weight:400;color:#222;font-family:'Liberation Sans',sans-serif;transform:scaleX(0.8727);transform-origin:0 0;">SOLIDWORKS</div><div class=t style="left:1445.00px;top:1063.79px;font-size:12px;line-height:1;font-weight:400;color:#222;font-family:'Liberation Sans',sans-serif;transform:scaleX(0.9820);transform-origin:0 0;">Under Defined</div><div class=t style="left:1539.00px;top:1063.79px;font-size:12px;line-height:1;font-weight:400;color:#222;font-family:'Liberation Sans',sans-serif;transform:scaleX(0.9480);transform-origin:0 0;">Editing Sheet1</div><div class=t style="left:1653.00px;top:1063.79px;font-size:12px;line-height:1;font-weight:400;color:#222;font-family:'Liberation Sans',sans-serif;transform:scaleX(0.8562);transform-origin:0 0;">1 : 5</div><svg class=a style="left:1699px;top:1068px;" width="6" height="4" viewBox="0 0 6 4"><path d="M0 4L3 0L6 4Z" fill="#333"/></svg><div class=t style="left:1830.00px;top:1063.79px;font-size:12px;line-height:1;font-weight:400;color:#222;font-family:'Liberation Sans',sans-serif;transform:scaleX(0.9640);transform-origin:0 0;">MMGS</div><svg class=a style="left:1884px;top:1068px;" width="7" height="4" viewBox="0 0 7 4"><path d="M0 4L3.5 0L7 4Z" fill="#333"/></svg><div class=a style="left:0px;top:1078px;width:1920px;height:2px;background:#1b4a7a;"></div>
</body></html>
